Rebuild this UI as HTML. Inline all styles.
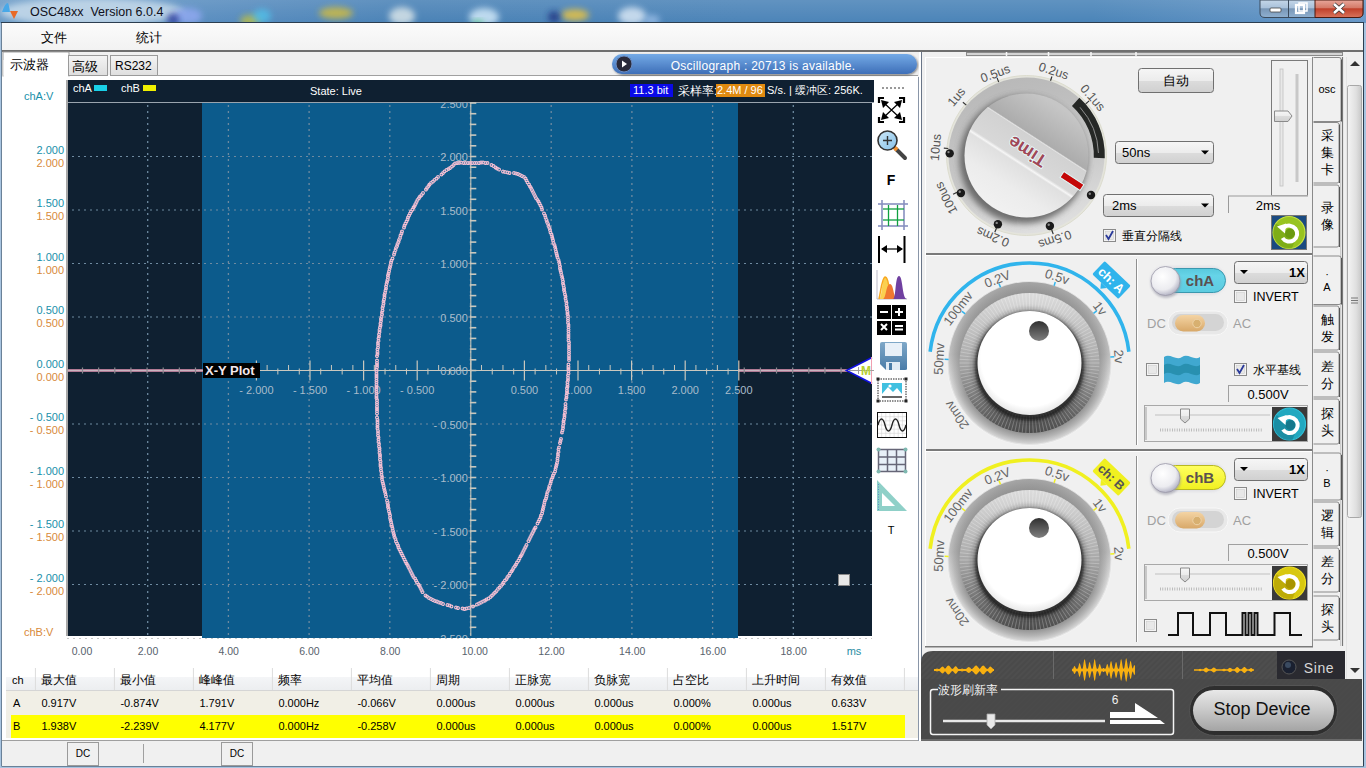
<!DOCTYPE html>
<html><head><meta charset="utf-8"><title>OSC48xx</title>
<style>html,body{margin:0;padding:0;width:1366px;height:768px;overflow:hidden;background:#f0f0f0;font-family:"Liberation Sans",sans-serif}</style></head>
<body><svg width="1366" height="768" viewBox="0 0 1366 768" style="display:block"><defs><linearGradient id="tb" x1="0" y1="0" x2="1" y2="0">
<stop offset="0" stop-color="#6a9ac6"/><stop offset="0.14" stop-color="#5a8ec0"/><stop offset="0.3" stop-color="#4a82b6"/>
<stop offset="0.55" stop-color="#4c84b8"/><stop offset="0.8" stop-color="#4a84b8"/><stop offset="1" stop-color="#6898c8"/></linearGradient>
<linearGradient id="tbv" x1="0" y1="0" x2="0" y2="1"><stop offset="0" stop-color="#fff" stop-opacity="0.12"/><stop offset="1" stop-color="#fff" stop-opacity="0"/></linearGradient>
<filter id="tbblur" x="-50%" y="-50%" width="200%" height="200%"><feGaussianBlur stdDeviation="3"/></filter><linearGradient id="wbtn" x1="0" y1="0" x2="0" y2="1"><stop offset="0" stop-color="#c4d6e8"/><stop offset="0.45" stop-color="#a9c1da"/><stop offset="0.5" stop-color="#7896b6"/><stop offset="1" stop-color="#8fb0d0"/></linearGradient>
<linearGradient id="wclose" x1="0" y1="0" x2="0" y2="1"><stop offset="0" stop-color="#e8a79a"/><stop offset="0.45" stop-color="#d47a68"/><stop offset="0.5" stop-color="#c0402a"/><stop offset="1" stop-color="#d9745c"/></linearGradient><linearGradient id="menu" x1="0" y1="0" x2="0" y2="1"><stop offset="0" stop-color="#fbfbfb"/><stop offset="1" stop-color="#f2f2f2"/></linearGradient><linearGradient id="tabg" x1="0" y1="0" x2="0" y2="1"><stop offset="0" stop-color="#f4f4f4"/><stop offset="1" stop-color="#dedede"/></linearGradient><linearGradient id="ban" x1="0" y1="0" x2="0" y2="1"><stop offset="0" stop-color="#74aae6"/><stop offset="1" stop-color="#3e6fb8"/></linearGradient>
<filter id="sh" x="-10%" y="-30%" width="120%" height="160%"><feGaussianBlur in="SourceAlpha" stdDeviation="1"/><feOffset dx="1" dy="1"/><feComponentTransfer><feFuncA type="linear" slope="0.5"/></feComponentTransfer><feMerge><feMergeNode/><feMergeNode in="SourceGraphic"/></feMerge></filter><clipPath id="blueclip"><rect x="202" y="103" width="536" height="535"/></clipPath><linearGradient id="mag" x1="0" y1="0" x2="1" y2="1"><stop offset="0" stop-color="#cfe8f8"/><stop offset="0.5" stop-color="#a8d4f0"/><stop offset="1" stop-color="#88c0e8"/></linearGradient><linearGradient id="flop" x1="0" y1="0" x2="0" y2="1"><stop offset="0" stop-color="#7fa8c8"/><stop offset="1" stop-color="#4a7ca8"/></linearGradient><linearGradient id="th" x1="0" y1="0" x2="0" y2="1"><stop offset="0" stop-color="#ffffff"/><stop offset="0.4" stop-color="#ffffff"/><stop offset="0.41" stop-color="#f4f5f7"/><stop offset="1" stop-color="#eceef0"/></linearGradient><linearGradient id="thumb" x1="0" y1="0" x2="1" y2="0"><stop offset="0" stop-color="#f4f4f4"/><stop offset="0.6" stop-color="#e0e0e0"/><stop offset="1" stop-color="#c8c8c8"/></linearGradient><radialGradient id="tring" cx="0.5" cy="0.5" r="0.5"><stop offset="0.75" stop-color="#a8a8a8"/><stop offset="0.92" stop-color="#c4c4c4"/><stop offset="1" stop-color="#dadada"/></radialGradient>
<linearGradient id="tring2" x1="0.3" y1="0" x2="0.6" y2="1"><stop offset="0" stop-color="#b8b8b8"/><stop offset="0.6" stop-color="#c8c8c8"/><stop offset="1" stop-color="#e0e0e0"/></linearGradient>
<linearGradient id="tface" x1="0.2" y1="0.95" x2="0.75" y2="0.1"><stop offset="0" stop-color="#f2f2f2"/><stop offset="0.25" stop-color="#ececec"/><stop offset="0.44" stop-color="#e0e0e0"/><stop offset="0.455" stop-color="#f6f6f6"/><stop offset="0.475" stop-color="#d8d8d8"/><stop offset="0.68" stop-color="#d2d2d2"/><stop offset="0.687" stop-color="#e4e4e4"/><stop offset="0.697" stop-color="#acacac"/><stop offset="1" stop-color="#c6c6c6"/></linearGradient>
<filter id="blur2"><feGaussianBlur stdDeviation="3"/></filter>
<filter id="blur1"><feGaussianBlur stdDeviation="1.2"/></filter><linearGradient id="btn" x1="0" y1="0" x2="0" y2="1"><stop offset="0" stop-color="#f6f6f6"/><stop offset="0.5" stop-color="#ececec"/><stop offset="0.51" stop-color="#dcdcdc"/><stop offset="1" stop-color="#d0d0d0"/></linearGradient><radialGradient id="cring" cx="0.5" cy="0.5" r="0.5"><stop offset="0.84" stop-color="#8c8c8c"/><stop offset="0.93" stop-color="#b4b4b4"/><stop offset="1" stop-color="#dadada"/></radialGradient>
<linearGradient id="cringtop" x1="0" y1="0" x2="0" y2="1"><stop offset="0" stop-color="#909090" stop-opacity="0.7"/><stop offset="0.45" stop-color="#a0a0a0" stop-opacity="0.4"/><stop offset="0.7" stop-color="#ffffff" stop-opacity="0"/></linearGradient>
<linearGradient id="cridge" x1="0" y1="0" x2="0" y2="1"><stop offset="0" stop-color="#dcdcdc"/><stop offset="0.5" stop-color="#a8a8a8"/><stop offset="1" stop-color="#4a4a4a"/></linearGradient>
<linearGradient id="cdot" x1="0" y1="0" x2="0" y2="1"><stop offset="0" stop-color="#303030"/><stop offset="1" stop-color="#808080"/></linearGradient>
<radialGradient id="cwhite" cx="0.5" cy="0.45" r="0.55"><stop offset="0.85" stop-color="#ffffff"/><stop offset="1" stop-color="#e8e8e8"/></radialGradient>
<linearGradient id="pillc" x1="0" y1="0" x2="0" y2="1"><stop offset="0" stop-color="#58c8dc"/><stop offset="0.3" stop-color="#66d4e8"/><stop offset="1" stop-color="#5ccce0"/></linearGradient>
<linearGradient id="pilly" x1="0" y1="0" x2="0" y2="1"><stop offset="0" stop-color="#ffff60"/><stop offset="1" stop-color="#f0f020"/></linearGradient>
<radialGradient id="pknob" cx="0.4" cy="0.35" r="0.65"><stop offset="0" stop-color="#ffffff"/><stop offset="0.7" stop-color="#ececf0"/><stop offset="1" stop-color="#b8b8c8"/></radialGradient>
<linearGradient id="tan" x1="0" y1="0" x2="0" y2="1"><stop offset="0" stop-color="#f4d4a4"/><stop offset="1" stop-color="#d8a868"/></linearGradient><pattern id="stripe" width="4" height="4" patternUnits="userSpaceOnUse" patternTransform="rotate(45)"><rect width="4" height="4" fill="#4e4e4e"/><rect width="2" height="4" fill="#4a4a4a"/></pattern>
<linearGradient id="stopb" x1="0" y1="0" x2="0" y2="1"><stop offset="0" stop-color="#e8e8e8"/><stop offset="0.5" stop-color="#c8c8c8"/><stop offset="1" stop-color="#a4a4a4"/></linearGradient></defs><rect x="0" y="0" width="1366" height="768" fill="url(#tb)" /><rect x="0" y="0" width="1366" height="23" fill="url(#tbv)" /><ellipse cx="92" cy="12" rx="92" ry="14" fill="#d4e4f0" opacity="0.75" filter="url(#tbblur)"/><ellipse cx="188" cy="16" rx="14" ry="8" fill="#90a8f0" opacity="0.85" filter="url(#tbblur)"/><ellipse cx="173" cy="19" rx="6" ry="6" fill="#1a2890" opacity="0.7" filter="url(#tbblur)"/><ellipse cx="250" cy="21" rx="10" ry="6" fill="#c0c040" opacity="0.8" filter="url(#tbblur)"/><ellipse cx="262" cy="16" rx="9" ry="7" fill="#50c8f0" opacity="0.7" filter="url(#tbblur)"/><ellipse cx="336" cy="13" rx="17" ry="6" fill="#c8b848" opacity="0.9" filter="url(#tbblur)"/><ellipse cx="402" cy="16" rx="13" ry="9" fill="#d8e4e8" opacity="0.85" filter="url(#tbblur)"/><ellipse cx="484" cy="17" rx="15" ry="9" fill="#d0e8f8" opacity="0.85" filter="url(#tbblur)"/><ellipse cx="478" cy="23" rx="6" ry="3" fill="#40c070" opacity="0.7" filter="url(#tbblur)"/><ellipse cx="575" cy="15" rx="14" ry="6" fill="#e0c048" opacity="0.9" filter="url(#tbblur)"/><ellipse cx="554" cy="17" rx="6" ry="6" fill="#182878" opacity="0.7" filter="url(#tbblur)"/><ellipse cx="632" cy="16" rx="14" ry="9" fill="#e0ecf8" opacity="0.8" filter="url(#tbblur)"/><ellipse cx="652" cy="20" rx="8" ry="5" fill="#a8c8f0" opacity="0.7" filter="url(#tbblur)"/><path d="M1260,0 H1363 V13 Q1363,17.5 1358,17.5 H1265 Q1260,17.5 1260,13 Z" fill="url(#wbtn)" stroke="#3a4a5c" stroke-width="1"/><path d="M1315,0 H1363 V13 Q1363,17.5 1358,17.5 H1315 Z" fill="url(#wclose)" stroke="#4a1a10" stroke-width="1"/><line x1="1288.5" y1="0" x2="1288.5" y2="17" stroke="#3a4a5c" stroke-width="1" /><rect x="1270" y="8" width="11" height="4" fill="#fff" stroke="#444" stroke-width="0.8" rx="1"/><rect x="1296" y="5" width="8" height="8" fill="none" stroke="#fff" stroke-width="2.2"/><rect x="1299" y="3" width="8" height="8" fill="none" stroke="#fff" stroke-width="1.5"/><path d="M1334,4 L1344,13 M1344,4 L1334,13" stroke="#333" stroke-width="4"/><path d="M1334,4 L1344,13 M1344,4 L1334,13" stroke="#fff" stroke-width="2.6"/><path d="M2,12 Q5,3 8,3 Q9,5 10,12 Z" fill="#48a8e8"/><path d="M10,11 H18 L14,19 Z" fill="#e86a28"/><text x="30" y="16.00" font-size="12.5" fill="#101020" text-anchor="start" font-weight="normal" font-family="Liberation Sans, sans-serif" >OSC48xx&#160; Version 6.0.4</text><rect x="2" y="23" width="1361" height="743" fill="#f0f0f0" /><rect x="1.5" y="22.5" width="1362" height="744" fill="none" stroke="#2c3e50" stroke-width="1"/><rect x="2" y="23" width="1361" height="27" fill="url(#menu)" /><rect x="2" y="50" width="1361" height="2" fill="#6f6f6f" /><text x="41" y="41.68" font-size="13" fill="#000" text-anchor="start" font-weight="normal" font-family="Liberation Sans, sans-serif" >文件</text><text x="136" y="41.68" font-size="13" fill="#000" text-anchor="start" font-weight="normal" font-family="Liberation Sans, sans-serif" >统计</text><rect x="2" y="52" width="916" height="25" fill="#f0f0f0" /><rect x="2" y="75" width="916" height="666" fill="#ffffff" /><rect x="3" y="52" width="66" height="24" fill="#ffffff" stroke="#a0a0a0" stroke-width="1"/><rect x="3.5" y="60" width="65" height="20" fill="#fff" /><text x="10" y="68.68" font-size="13" fill="#000" text-anchor="start" font-weight="normal" font-family="Liberation Sans, sans-serif" >示波器</text><rect x="68.5" y="55.5" width="39" height="20" fill="url(#tabg)" stroke="#9a9a9a" stroke-width="1"/><text x="72" y="70.68" font-size="13" fill="#000" text-anchor="start" font-weight="normal" font-family="Liberation Sans, sans-serif" >高级</text><rect x="110.5" y="55.5" width="47" height="20" fill="url(#tabg)" stroke="#9a9a9a" stroke-width="1"/><text x="115" y="70.32" font-size="12" fill="#000" text-anchor="start" font-weight="normal" font-family="Liberation Sans, sans-serif" >RS232</text><line x1="157" y1="75.5" x2="918" y2="75.5" stroke="#a0a0a0" stroke-width="1" /><rect x="612" y="54" width="305" height="20" rx="10" fill="url(#ban)" filter="url(#sh)"/><circle cx="624" cy="64" r="8" fill="#2a2a3a"/><circle cx="624" cy="64" r="8" fill="none" stroke="#6a8ac0" stroke-width="1"/><path d="M622,60.5 L627,64 L622,67.5 Z" fill="#fff"/><text x="763" y="69.82" font-size="12" fill="#ffffff" text-anchor="middle" font-weight="normal" font-family="Liberation Sans, sans-serif" letter-spacing="0.25">Oscillograph : 20713 is available.</text><rect x="66" y="80" width="808" height="22" fill="#0f2031" /><rect x="66" y="102" width="808" height="1" fill="#9aa4ae" /><rect x="66" y="103" width="806" height="533" fill="#0f2031" /><rect x="66" y="80" width="2" height="556" fill="#a8a8a8" /><rect x="202" y="103" width="536" height="535" fill="#0c5b8c" /><line x1="67" y1="638.5" x2="872" y2="638.5" stroke="#c8c8c8" stroke-width="1" stroke-dasharray="2 4"/><line x1="72" y1="156.5" x2="872" y2="156.5" stroke="#6e8aa0" stroke-width="1" stroke-dasharray="2 4"/><line x1="72" y1="210.0" x2="872" y2="210.0" stroke="#6e8aa0" stroke-width="1" stroke-dasharray="2 4"/><line x1="72" y1="263.5" x2="872" y2="263.5" stroke="#6e8aa0" stroke-width="1" stroke-dasharray="2 4"/><line x1="72" y1="317.0" x2="872" y2="317.0" stroke="#6e8aa0" stroke-width="1" stroke-dasharray="2 4"/><line x1="72" y1="370.5" x2="872" y2="370.5" stroke="#6e8aa0" stroke-width="1" stroke-dasharray="2 4"/><line x1="72" y1="424.0" x2="872" y2="424.0" stroke="#6e8aa0" stroke-width="1" stroke-dasharray="2 4"/><line x1="72" y1="477.5" x2="872" y2="477.5" stroke="#6e8aa0" stroke-width="1" stroke-dasharray="2 4"/><line x1="72" y1="531.0" x2="872" y2="531.0" stroke="#6e8aa0" stroke-width="1" stroke-dasharray="2 4"/><line x1="72" y1="584.5" x2="872" y2="584.5" stroke="#6e8aa0" stroke-width="1" stroke-dasharray="2 4"/><line x1="147.7" y1="105" x2="147.7" y2="636" stroke="#6e8aa0" stroke-width="1.3" stroke-dasharray="2 4"/><line x1="228.4" y1="105" x2="228.4" y2="636" stroke="#6e8aa0" stroke-width="1.3" stroke-dasharray="2 4"/><line x1="309.1" y1="105" x2="309.1" y2="636" stroke="#6e8aa0" stroke-width="1.3" stroke-dasharray="2 4"/><line x1="389.8" y1="105" x2="389.8" y2="636" stroke="#6e8aa0" stroke-width="1.3" stroke-dasharray="2 4"/><line x1="470.5" y1="105" x2="470.5" y2="636" stroke="#6e8aa0" stroke-width="1.3" stroke-dasharray="2 4"/><line x1="551.2" y1="105" x2="551.2" y2="636" stroke="#6e8aa0" stroke-width="1.3" stroke-dasharray="2 4"/><line x1="631.9" y1="105" x2="631.9" y2="636" stroke="#6e8aa0" stroke-width="1.3" stroke-dasharray="2 4"/><line x1="712.6" y1="105" x2="712.6" y2="636" stroke="#6e8aa0" stroke-width="1.3" stroke-dasharray="2 4"/><line x1="793.3000000000001" y1="105" x2="793.3000000000001" y2="636" stroke="#6e8aa0" stroke-width="1.3" stroke-dasharray="2 4"/><line x1="68" y1="370.5" x2="203" y2="370.5" stroke="#b07a94" stroke-width="3" /><line x1="738" y1="370.5" x2="848" y2="370.5" stroke="#b07a94" stroke-width="3" /><line x1="68" y1="370.5" x2="203" y2="370.5" stroke="#c8b4bf" stroke-width="1" /><line x1="738" y1="370.5" x2="848" y2="370.5" stroke="#c8b4bf" stroke-width="1" /><line x1="82.5" y1="367.5" x2="82.5" y2="373.5" stroke="#8a8a90" stroke-width="1.2" /><line x1="98.64" y1="367.5" x2="98.64" y2="373.5" stroke="#8a8a90" stroke-width="1.2" /><line x1="114.78" y1="367.5" x2="114.78" y2="373.5" stroke="#8a8a90" stroke-width="1.2" /><line x1="130.92000000000002" y1="367.5" x2="130.92000000000002" y2="373.5" stroke="#8a8a90" stroke-width="1.2" /><line x1="147.06" y1="367.5" x2="147.06" y2="373.5" stroke="#8a8a90" stroke-width="1.2" /><line x1="163.2" y1="367.5" x2="163.2" y2="373.5" stroke="#8a8a90" stroke-width="1.2" /><line x1="179.34" y1="367.5" x2="179.34" y2="373.5" stroke="#8a8a90" stroke-width="1.2" /><line x1="195.48000000000002" y1="367.5" x2="195.48000000000002" y2="373.5" stroke="#8a8a90" stroke-width="1.2" /><line x1="744.24" y1="367.5" x2="744.24" y2="373.5" stroke="#8a8a90" stroke-width="1.2" /><line x1="760.38" y1="367.5" x2="760.38" y2="373.5" stroke="#8a8a90" stroke-width="1.2" /><line x1="776.52" y1="367.5" x2="776.52" y2="373.5" stroke="#8a8a90" stroke-width="1.2" /><line x1="792.6600000000001" y1="367.5" x2="792.6600000000001" y2="373.5" stroke="#8a8a90" stroke-width="1.2" /><line x1="808.8000000000001" y1="367.5" x2="808.8000000000001" y2="373.5" stroke="#8a8a90" stroke-width="1.2" /><line x1="824.94" y1="367.5" x2="824.94" y2="373.5" stroke="#8a8a90" stroke-width="1.2" /><line x1="841.08" y1="367.5" x2="841.08" y2="373.5" stroke="#8a8a90" stroke-width="1.2" /><line x1="203" y1="370.5" x2="738" y2="370.5" stroke="#cac8be" stroke-width="1.1" /><line x1="470.8" y1="103" x2="470.8" y2="636" stroke="#cac8be" stroke-width="1.1" /><line x1="213.51999999999998" y1="368.5" x2="213.51999999999998" y2="374.5" stroke="#cac8be" stroke-width="1" /><line x1="224.24" y1="365.0" x2="224.24" y2="370.5" stroke="#cac8be" stroke-width="1" /><line x1="234.95999999999998" y1="368.5" x2="234.95999999999998" y2="374.5" stroke="#cac8be" stroke-width="1" /><line x1="245.67999999999998" y1="365.0" x2="245.67999999999998" y2="370.5" stroke="#cac8be" stroke-width="1" /><line x1="256.4" y1="360.5" x2="256.4" y2="380.5" stroke="#cac8be" stroke-width="1.2" /><line x1="267.12" y1="365.0" x2="267.12" y2="370.5" stroke="#cac8be" stroke-width="1" /><line x1="277.84" y1="368.5" x2="277.84" y2="374.5" stroke="#cac8be" stroke-width="1" /><line x1="288.56" y1="365.0" x2="288.56" y2="370.5" stroke="#cac8be" stroke-width="1" /><line x1="299.28" y1="368.5" x2="299.28" y2="374.5" stroke="#cac8be" stroke-width="1" /><line x1="310.0" y1="360.5" x2="310.0" y2="380.5" stroke="#cac8be" stroke-width="1.2" /><line x1="320.72" y1="368.5" x2="320.72" y2="374.5" stroke="#cac8be" stroke-width="1" /><line x1="331.44" y1="365.0" x2="331.44" y2="370.5" stroke="#cac8be" stroke-width="1" /><line x1="342.15999999999997" y1="368.5" x2="342.15999999999997" y2="374.5" stroke="#cac8be" stroke-width="1" /><line x1="352.88" y1="365.0" x2="352.88" y2="370.5" stroke="#cac8be" stroke-width="1" /><line x1="363.6" y1="360.5" x2="363.6" y2="380.5" stroke="#cac8be" stroke-width="1.2" /><line x1="374.32" y1="365.0" x2="374.32" y2="370.5" stroke="#cac8be" stroke-width="1" /><line x1="385.04" y1="368.5" x2="385.04" y2="374.5" stroke="#cac8be" stroke-width="1" /><line x1="395.76" y1="365.0" x2="395.76" y2="370.5" stroke="#cac8be" stroke-width="1" /><line x1="406.48" y1="368.5" x2="406.48" y2="374.5" stroke="#cac8be" stroke-width="1" /><line x1="417.2" y1="360.5" x2="417.2" y2="380.5" stroke="#cac8be" stroke-width="1.2" /><line x1="427.92" y1="368.5" x2="427.92" y2="374.5" stroke="#cac8be" stroke-width="1" /><line x1="438.64" y1="365.0" x2="438.64" y2="370.5" stroke="#cac8be" stroke-width="1" /><line x1="449.36" y1="368.5" x2="449.36" y2="374.5" stroke="#cac8be" stroke-width="1" /><line x1="460.08" y1="365.0" x2="460.08" y2="370.5" stroke="#cac8be" stroke-width="1" /><line x1="470.8" y1="360.5" x2="470.8" y2="380.5" stroke="#cac8be" stroke-width="1.2" /><line x1="481.52000000000004" y1="365.0" x2="481.52000000000004" y2="370.5" stroke="#cac8be" stroke-width="1" /><line x1="492.24" y1="368.5" x2="492.24" y2="374.5" stroke="#cac8be" stroke-width="1" /><line x1="502.96000000000004" y1="365.0" x2="502.96000000000004" y2="370.5" stroke="#cac8be" stroke-width="1" /><line x1="513.6800000000001" y1="368.5" x2="513.6800000000001" y2="374.5" stroke="#cac8be" stroke-width="1" /><line x1="524.4" y1="360.5" x2="524.4" y2="380.5" stroke="#cac8be" stroke-width="1.2" /><line x1="535.12" y1="368.5" x2="535.12" y2="374.5" stroke="#cac8be" stroke-width="1" /><line x1="545.84" y1="365.0" x2="545.84" y2="370.5" stroke="#cac8be" stroke-width="1" /><line x1="556.5600000000001" y1="368.5" x2="556.5600000000001" y2="374.5" stroke="#cac8be" stroke-width="1" /><line x1="567.28" y1="365.0" x2="567.28" y2="370.5" stroke="#cac8be" stroke-width="1" /><line x1="578.0" y1="360.5" x2="578.0" y2="380.5" stroke="#cac8be" stroke-width="1.2" /><line x1="588.72" y1="365.0" x2="588.72" y2="370.5" stroke="#cac8be" stroke-width="1" /><line x1="599.44" y1="368.5" x2="599.44" y2="374.5" stroke="#cac8be" stroke-width="1" /><line x1="610.1600000000001" y1="365.0" x2="610.1600000000001" y2="370.5" stroke="#cac8be" stroke-width="1" /><line x1="620.88" y1="368.5" x2="620.88" y2="374.5" stroke="#cac8be" stroke-width="1" /><line x1="631.6" y1="360.5" x2="631.6" y2="380.5" stroke="#cac8be" stroke-width="1.2" /><line x1="642.32" y1="368.5" x2="642.32" y2="374.5" stroke="#cac8be" stroke-width="1" /><line x1="653.04" y1="365.0" x2="653.04" y2="370.5" stroke="#cac8be" stroke-width="1" /><line x1="663.76" y1="368.5" x2="663.76" y2="374.5" stroke="#cac8be" stroke-width="1" /><line x1="674.48" y1="365.0" x2="674.48" y2="370.5" stroke="#cac8be" stroke-width="1" /><line x1="685.2" y1="360.5" x2="685.2" y2="380.5" stroke="#cac8be" stroke-width="1.2" /><line x1="695.9200000000001" y1="365.0" x2="695.9200000000001" y2="370.5" stroke="#cac8be" stroke-width="1" /><line x1="706.6400000000001" y1="368.5" x2="706.6400000000001" y2="374.5" stroke="#cac8be" stroke-width="1" /><line x1="717.36" y1="365.0" x2="717.36" y2="370.5" stroke="#cac8be" stroke-width="1" /><line x1="728.08" y1="368.5" x2="728.08" y2="374.5" stroke="#cac8be" stroke-width="1" /><line x1="738.8" y1="360.5" x2="738.8" y2="380.5" stroke="#cac8be" stroke-width="1.2" /><line x1="469.8" y1="627.3" x2="476.3" y2="627.3" stroke="#cac8be" stroke-width="1.6" /><line x1="469.8" y1="616.6" x2="476.3" y2="616.6" stroke="#cac8be" stroke-width="1.6" /><line x1="469.8" y1="605.9" x2="476.3" y2="605.9" stroke="#cac8be" stroke-width="1.6" /><line x1="469.8" y1="595.2" x2="476.3" y2="595.2" stroke="#cac8be" stroke-width="1.6" /><line x1="469.8" y1="584.5" x2="476.3" y2="584.5" stroke="#cac8be" stroke-width="1.6" /><line x1="469.8" y1="573.8" x2="476.3" y2="573.8" stroke="#cac8be" stroke-width="1.6" /><line x1="469.8" y1="563.1" x2="476.3" y2="563.1" stroke="#cac8be" stroke-width="1.6" /><line x1="469.8" y1="552.4" x2="476.3" y2="552.4" stroke="#cac8be" stroke-width="1.6" /><line x1="469.8" y1="541.7" x2="476.3" y2="541.7" stroke="#cac8be" stroke-width="1.6" /><line x1="469.8" y1="531.0" x2="476.3" y2="531.0" stroke="#cac8be" stroke-width="1.6" /><line x1="469.8" y1="520.3" x2="476.3" y2="520.3" stroke="#cac8be" stroke-width="1.6" /><line x1="469.8" y1="509.6" x2="476.3" y2="509.6" stroke="#cac8be" stroke-width="1.6" /><line x1="469.8" y1="498.9" x2="476.3" y2="498.9" stroke="#cac8be" stroke-width="1.6" /><line x1="469.8" y1="488.2" x2="476.3" y2="488.2" stroke="#cac8be" stroke-width="1.6" /><line x1="469.8" y1="477.5" x2="476.3" y2="477.5" stroke="#cac8be" stroke-width="1.6" /><line x1="469.8" y1="466.8" x2="476.3" y2="466.8" stroke="#cac8be" stroke-width="1.6" /><line x1="469.8" y1="456.1" x2="476.3" y2="456.1" stroke="#cac8be" stroke-width="1.6" /><line x1="469.8" y1="445.4" x2="476.3" y2="445.4" stroke="#cac8be" stroke-width="1.6" /><line x1="469.8" y1="434.7" x2="476.3" y2="434.7" stroke="#cac8be" stroke-width="1.6" /><line x1="469.8" y1="424.0" x2="476.3" y2="424.0" stroke="#cac8be" stroke-width="1.6" /><line x1="469.8" y1="413.3" x2="476.3" y2="413.3" stroke="#cac8be" stroke-width="1.6" /><line x1="469.8" y1="402.6" x2="476.3" y2="402.6" stroke="#cac8be" stroke-width="1.6" /><line x1="469.8" y1="391.9" x2="476.3" y2="391.9" stroke="#cac8be" stroke-width="1.6" /><line x1="469.8" y1="381.2" x2="476.3" y2="381.2" stroke="#cac8be" stroke-width="1.6" /><line x1="469.8" y1="370.5" x2="476.3" y2="370.5" stroke="#cac8be" stroke-width="1.6" /><line x1="469.8" y1="359.8" x2="476.3" y2="359.8" stroke="#cac8be" stroke-width="1.6" /><line x1="469.8" y1="349.1" x2="476.3" y2="349.1" stroke="#cac8be" stroke-width="1.6" /><line x1="469.8" y1="338.4" x2="476.3" y2="338.4" stroke="#cac8be" stroke-width="1.6" /><line x1="469.8" y1="327.7" x2="476.3" y2="327.7" stroke="#cac8be" stroke-width="1.6" /><line x1="469.8" y1="317.0" x2="476.3" y2="317.0" stroke="#cac8be" stroke-width="1.6" /><line x1="469.8" y1="306.3" x2="476.3" y2="306.3" stroke="#cac8be" stroke-width="1.6" /><line x1="469.8" y1="295.6" x2="476.3" y2="295.6" stroke="#cac8be" stroke-width="1.6" /><line x1="469.8" y1="284.9" x2="476.3" y2="284.9" stroke="#cac8be" stroke-width="1.6" /><line x1="469.8" y1="274.2" x2="476.3" y2="274.2" stroke="#cac8be" stroke-width="1.6" /><line x1="469.8" y1="263.5" x2="476.3" y2="263.5" stroke="#cac8be" stroke-width="1.6" /><line x1="469.8" y1="252.8" x2="476.3" y2="252.8" stroke="#cac8be" stroke-width="1.6" /><line x1="469.8" y1="242.1" x2="476.3" y2="242.1" stroke="#cac8be" stroke-width="1.6" /><line x1="469.8" y1="231.4" x2="476.3" y2="231.4" stroke="#cac8be" stroke-width="1.6" /><line x1="469.8" y1="220.7" x2="476.3" y2="220.7" stroke="#cac8be" stroke-width="1.6" /><line x1="469.8" y1="210.0" x2="476.3" y2="210.0" stroke="#cac8be" stroke-width="1.6" /><line x1="469.8" y1="199.29999999999998" x2="476.3" y2="199.29999999999998" stroke="#cac8be" stroke-width="1.6" /><line x1="469.8" y1="188.6" x2="476.3" y2="188.6" stroke="#cac8be" stroke-width="1.6" /><line x1="469.8" y1="177.89999999999998" x2="476.3" y2="177.89999999999998" stroke="#cac8be" stroke-width="1.6" /><line x1="469.8" y1="167.2" x2="476.3" y2="167.2" stroke="#cac8be" stroke-width="1.6" /><line x1="469.8" y1="156.5" x2="476.3" y2="156.5" stroke="#cac8be" stroke-width="1.6" /><line x1="469.8" y1="145.79999999999998" x2="476.3" y2="145.79999999999998" stroke="#cac8be" stroke-width="1.6" /><line x1="469.8" y1="135.1" x2="476.3" y2="135.1" stroke="#cac8be" stroke-width="1.6" /><line x1="469.8" y1="124.39999999999998" x2="476.3" y2="124.39999999999998" stroke="#cac8be" stroke-width="1.6" /><line x1="469.8" y1="113.69999999999999" x2="476.3" y2="113.69999999999999" stroke="#cac8be" stroke-width="1.6" /><line x1="469.8" y1="103.0" x2="476.3" y2="103.0" stroke="#cac8be" stroke-width="1.6" /><g clip-path="url(#blueclip)"></g><text x="256.4" y="393.96" font-size="11" fill="#a8bccb" text-anchor="middle" font-weight="normal" font-family="Liberation Sans, sans-serif" >- 2.000</text><text x="310.0" y="393.96" font-size="11" fill="#a8bccb" text-anchor="middle" font-weight="normal" font-family="Liberation Sans, sans-serif" >- 1.500</text><text x="363.6" y="393.96" font-size="11" fill="#a8bccb" text-anchor="middle" font-weight="normal" font-family="Liberation Sans, sans-serif" >- 1.000</text><text x="417.2" y="393.96" font-size="11" fill="#a8bccb" text-anchor="middle" font-weight="normal" font-family="Liberation Sans, sans-serif" >- 0.500</text><text x="524.4" y="393.96" font-size="11" fill="#a8bccb" text-anchor="middle" font-weight="normal" font-family="Liberation Sans, sans-serif" >0.500</text><text x="578.0" y="393.96" font-size="11" fill="#a8bccb" text-anchor="middle" font-weight="normal" font-family="Liberation Sans, sans-serif" >1.000</text><text x="631.6" y="393.96" font-size="11" fill="#a8bccb" text-anchor="middle" font-weight="normal" font-family="Liberation Sans, sans-serif" >1.500</text><text x="685.2" y="393.96" font-size="11" fill="#a8bccb" text-anchor="middle" font-weight="normal" font-family="Liberation Sans, sans-serif" >2.000</text><text x="738.8" y="393.96" font-size="11" fill="#a8bccb" text-anchor="middle" font-weight="normal" font-family="Liberation Sans, sans-serif" >2.500</text><g clip-path="url(#blueclip)"><text x="467.8" y="107.96" font-size="11" fill="#a8bccb" text-anchor="end" font-weight="normal" font-family="Liberation Sans, sans-serif" >2.500</text><text x="467.8" y="161.46" font-size="11" fill="#a8bccb" text-anchor="end" font-weight="normal" font-family="Liberation Sans, sans-serif" >2.000</text><text x="467.8" y="214.96" font-size="11" fill="#a8bccb" text-anchor="end" font-weight="normal" font-family="Liberation Sans, sans-serif" >1.500</text><text x="467.8" y="268.46" font-size="11" fill="#a8bccb" text-anchor="end" font-weight="normal" font-family="Liberation Sans, sans-serif" >1.000</text><text x="467.8" y="321.96" font-size="11" fill="#a8bccb" text-anchor="end" font-weight="normal" font-family="Liberation Sans, sans-serif" >0.500</text><text x="467.8" y="375.46" font-size="11" fill="#a8bccb" text-anchor="end" font-weight="normal" font-family="Liberation Sans, sans-serif" >0.000</text><text x="467.8" y="428.96" font-size="11" fill="#a8bccb" text-anchor="end" font-weight="normal" font-family="Liberation Sans, sans-serif" >- 0.500</text><text x="467.8" y="482.46" font-size="11" fill="#a8bccb" text-anchor="end" font-weight="normal" font-family="Liberation Sans, sans-serif" >- 1.000</text><text x="467.8" y="535.96" font-size="11" fill="#a8bccb" text-anchor="end" font-weight="normal" font-family="Liberation Sans, sans-serif" >- 1.500</text><text x="467.8" y="589.46" font-size="11" fill="#a8bccb" text-anchor="end" font-weight="normal" font-family="Liberation Sans, sans-serif" >- 2.000</text><text x="467.8" y="642.96" font-size="11" fill="#a8bccb" text-anchor="end" font-weight="normal" font-family="Liberation Sans, sans-serif" >- 2.500</text></g><rect x="203" y="363" width="57" height="15" fill="#000" /><text x="205" y="375.18" font-size="13" fill="#f4e8ec" text-anchor="start" font-weight="bold" font-family="Liberation Sans, sans-serif" >X-Y Plot</text><path d="M455.6,163.0a1.4,1.4 0 1 0 2.8,0a1.4,1.4 0 1 0 -2.8,0M457.6,163.0a1.4,1.4 0 1 0 2.8,0a1.4,1.4 0 1 0 -2.8,0M459.6,162.5a1.4,1.4 0 1 0 2.8,0a1.4,1.4 0 1 0 -2.8,0M462.1,163.0a1.4,1.4 0 1 0 2.8,0a1.4,1.4 0 1 0 -2.8,0M464.1,163.0a1.4,1.4 0 1 0 2.8,0a1.4,1.4 0 1 0 -2.8,0M466.6,163.0a1.4,1.4 0 1 0 2.8,0a1.4,1.4 0 1 0 -2.8,0M468.6,163.0a1.4,1.4 0 1 0 2.8,0a1.4,1.4 0 1 0 -2.8,0M470.6,163.0a1.4,1.4 0 1 0 2.8,0a1.4,1.4 0 1 0 -2.8,0M473.1,163.0a1.4,1.4 0 1 0 2.8,0a1.4,1.4 0 1 0 -2.8,0M475.1,163.0a1.4,1.4 0 1 0 2.8,0a1.4,1.4 0 1 0 -2.8,0M477.6,163.0a1.4,1.4 0 1 0 2.8,0a1.4,1.4 0 1 0 -2.8,0M479.6,162.5a1.4,1.4 0 1 0 2.8,0a1.4,1.4 0 1 0 -2.8,0M481.6,162.5a1.4,1.4 0 1 0 2.8,0a1.4,1.4 0 1 0 -2.8,0M484.1,163.0a1.4,1.4 0 1 0 2.8,0a1.4,1.4 0 1 0 -2.8,0M486.1,163.0a1.4,1.4 0 1 0 2.8,0a1.4,1.4 0 1 0 -2.8,0M490.1,165.0a1.4,1.4 0 1 0 2.8,0a1.4,1.4 0 1 0 -2.8,0M492.1,166.0a1.4,1.4 0 1 0 2.8,0a1.4,1.4 0 1 0 -2.8,0M494.1,167.5a1.4,1.4 0 1 0 2.8,0a1.4,1.4 0 1 0 -2.8,0M495.6,168.5a1.4,1.4 0 1 0 2.8,0a1.4,1.4 0 1 0 -2.8,0M497.6,169.5a1.4,1.4 0 1 0 2.8,0a1.4,1.4 0 1 0 -2.8,0M501.6,171.5a1.4,1.4 0 1 0 2.8,0a1.4,1.4 0 1 0 -2.8,0M503.6,172.0a1.4,1.4 0 1 0 2.8,0a1.4,1.4 0 1 0 -2.8,0M506.1,172.5a1.4,1.4 0 1 0 2.8,0a1.4,1.4 0 1 0 -2.8,0M508.1,173.0a1.4,1.4 0 1 0 2.8,0a1.4,1.4 0 1 0 -2.8,0M512.6,173.0a1.4,1.4 0 1 0 2.8,0a1.4,1.4 0 1 0 -2.8,0M514.6,173.5a1.4,1.4 0 1 0 2.8,0a1.4,1.4 0 1 0 -2.8,0M516.6,174.0a1.4,1.4 0 1 0 2.8,0a1.4,1.4 0 1 0 -2.8,0M518.6,175.0a1.4,1.4 0 1 0 2.8,0a1.4,1.4 0 1 0 -2.8,0M520.6,176.0a1.4,1.4 0 1 0 2.8,0a1.4,1.4 0 1 0 -2.8,0M522.6,177.0a1.4,1.4 0 1 0 2.8,0a1.4,1.4 0 1 0 -2.8,0M524.1,178.5a1.4,1.4 0 1 0 2.8,0a1.4,1.4 0 1 0 -2.8,0M525.1,180.5a1.4,1.4 0 1 0 2.8,0a1.4,1.4 0 1 0 -2.8,0M526.1,182.5a1.4,1.4 0 1 0 2.8,0a1.4,1.4 0 1 0 -2.8,0M527.6,184.5a1.4,1.4 0 1 0 2.8,0a1.4,1.4 0 1 0 -2.8,0M528.6,186.5a1.4,1.4 0 1 0 2.8,0a1.4,1.4 0 1 0 -2.8,0M529.6,188.0a1.4,1.4 0 1 0 2.8,0a1.4,1.4 0 1 0 -2.8,0M530.6,190.0a1.4,1.4 0 1 0 2.8,0a1.4,1.4 0 1 0 -2.8,0M531.6,192.0a1.4,1.4 0 1 0 2.8,0a1.4,1.4 0 1 0 -2.8,0M532.6,194.0a1.4,1.4 0 1 0 2.8,0a1.4,1.4 0 1 0 -2.8,0M533.6,196.0a1.4,1.4 0 1 0 2.8,0a1.4,1.4 0 1 0 -2.8,0M534.6,198.0a1.4,1.4 0 1 0 2.8,0a1.4,1.4 0 1 0 -2.8,0M536.1,200.0a1.4,1.4 0 1 0 2.8,0a1.4,1.4 0 1 0 -2.8,0M537.1,201.5a1.4,1.4 0 1 0 2.8,0a1.4,1.4 0 1 0 -2.8,0M538.1,203.5a1.4,1.4 0 1 0 2.8,0a1.4,1.4 0 1 0 -2.8,0M539.1,205.5a1.4,1.4 0 1 0 2.8,0a1.4,1.4 0 1 0 -2.8,0M540.1,207.5a1.4,1.4 0 1 0 2.8,0a1.4,1.4 0 1 0 -2.8,0M540.6,209.5a1.4,1.4 0 1 0 2.8,0a1.4,1.4 0 1 0 -2.8,0M542.6,213.5a1.4,1.4 0 1 0 2.8,0a1.4,1.4 0 1 0 -2.8,0M543.6,215.5a1.4,1.4 0 1 0 2.8,0a1.4,1.4 0 1 0 -2.8,0M544.1,217.5a1.4,1.4 0 1 0 2.8,0a1.4,1.4 0 1 0 -2.8,0M545.1,220.0a1.4,1.4 0 1 0 2.8,0a1.4,1.4 0 1 0 -2.8,0M545.6,222.0a1.4,1.4 0 1 0 2.8,0a1.4,1.4 0 1 0 -2.8,0M546.6,224.0a1.4,1.4 0 1 0 2.8,0a1.4,1.4 0 1 0 -2.8,0M547.1,226.0a1.4,1.4 0 1 0 2.8,0a1.4,1.4 0 1 0 -2.8,0M548.1,228.0a1.4,1.4 0 1 0 2.8,0a1.4,1.4 0 1 0 -2.8,0M548.6,230.0a1.4,1.4 0 1 0 2.8,0a1.4,1.4 0 1 0 -2.8,0M549.1,232.5a1.4,1.4 0 1 0 2.8,0a1.4,1.4 0 1 0 -2.8,0M550.1,234.5a1.4,1.4 0 1 0 2.8,0a1.4,1.4 0 1 0 -2.8,0M550.6,236.5a1.4,1.4 0 1 0 2.8,0a1.4,1.4 0 1 0 -2.8,0M551.1,238.5a1.4,1.4 0 1 0 2.8,0a1.4,1.4 0 1 0 -2.8,0M551.6,240.5a1.4,1.4 0 1 0 2.8,0a1.4,1.4 0 1 0 -2.8,0M552.1,243.0a1.4,1.4 0 1 0 2.8,0a1.4,1.4 0 1 0 -2.8,0M553.1,245.0a1.4,1.4 0 1 0 2.8,0a1.4,1.4 0 1 0 -2.8,0M553.6,247.0a1.4,1.4 0 1 0 2.8,0a1.4,1.4 0 1 0 -2.8,0M554.1,249.0a1.4,1.4 0 1 0 2.8,0a1.4,1.4 0 1 0 -2.8,0M554.6,251.5a1.4,1.4 0 1 0 2.8,0a1.4,1.4 0 1 0 -2.8,0M555.1,253.5a1.4,1.4 0 1 0 2.8,0a1.4,1.4 0 1 0 -2.8,0M555.6,255.5a1.4,1.4 0 1 0 2.8,0a1.4,1.4 0 1 0 -2.8,0M556.1,257.5a1.4,1.4 0 1 0 2.8,0a1.4,1.4 0 1 0 -2.8,0M557.1,260.0a1.4,1.4 0 1 0 2.8,0a1.4,1.4 0 1 0 -2.8,0M557.6,262.0a1.4,1.4 0 1 0 2.8,0a1.4,1.4 0 1 0 -2.8,0M558.1,264.0a1.4,1.4 0 1 0 2.8,0a1.4,1.4 0 1 0 -2.8,0M558.6,266.5a1.4,1.4 0 1 0 2.8,0a1.4,1.4 0 1 0 -2.8,0M558.6,268.5a1.4,1.4 0 1 0 2.8,0a1.4,1.4 0 1 0 -2.8,0M559.1,270.5a1.4,1.4 0 1 0 2.8,0a1.4,1.4 0 1 0 -2.8,0M559.6,272.5a1.4,1.4 0 1 0 2.8,0a1.4,1.4 0 1 0 -2.8,0M560.1,275.0a1.4,1.4 0 1 0 2.8,0a1.4,1.4 0 1 0 -2.8,0M560.6,277.0a1.4,1.4 0 1 0 2.8,0a1.4,1.4 0 1 0 -2.8,0M561.1,279.0a1.4,1.4 0 1 0 2.8,0a1.4,1.4 0 1 0 -2.8,0M561.6,281.5a1.4,1.4 0 1 0 2.8,0a1.4,1.4 0 1 0 -2.8,0M561.6,283.5a1.4,1.4 0 1 0 2.8,0a1.4,1.4 0 1 0 -2.8,0M562.1,285.5a1.4,1.4 0 1 0 2.8,0a1.4,1.4 0 1 0 -2.8,0M562.6,288.0a1.4,1.4 0 1 0 2.8,0a1.4,1.4 0 1 0 -2.8,0M562.6,290.0a1.4,1.4 0 1 0 2.8,0a1.4,1.4 0 1 0 -2.8,0M563.1,292.0a1.4,1.4 0 1 0 2.8,0a1.4,1.4 0 1 0 -2.8,0M563.6,294.5a1.4,1.4 0 1 0 2.8,0a1.4,1.4 0 1 0 -2.8,0M564.1,296.5a1.4,1.4 0 1 0 2.8,0a1.4,1.4 0 1 0 -2.8,0M564.1,298.5a1.4,1.4 0 1 0 2.8,0a1.4,1.4 0 1 0 -2.8,0M564.6,301.0a1.4,1.4 0 1 0 2.8,0a1.4,1.4 0 1 0 -2.8,0M565.1,303.0a1.4,1.4 0 1 0 2.8,0a1.4,1.4 0 1 0 -2.8,0M565.1,305.5a1.4,1.4 0 1 0 2.8,0a1.4,1.4 0 1 0 -2.8,0M565.6,307.5a1.4,1.4 0 1 0 2.8,0a1.4,1.4 0 1 0 -2.8,0M565.6,309.5a1.4,1.4 0 1 0 2.8,0a1.4,1.4 0 1 0 -2.8,0M566.1,312.0a1.4,1.4 0 1 0 2.8,0a1.4,1.4 0 1 0 -2.8,0M566.1,314.0a1.4,1.4 0 1 0 2.8,0a1.4,1.4 0 1 0 -2.8,0M566.6,316.0a1.4,1.4 0 1 0 2.8,0a1.4,1.4 0 1 0 -2.8,0M566.6,318.5a1.4,1.4 0 1 0 2.8,0a1.4,1.4 0 1 0 -2.8,0M566.6,320.5a1.4,1.4 0 1 0 2.8,0a1.4,1.4 0 1 0 -2.8,0M566.6,323.0a1.4,1.4 0 1 0 2.8,0a1.4,1.4 0 1 0 -2.8,0M567.1,325.0a1.4,1.4 0 1 0 2.8,0a1.4,1.4 0 1 0 -2.8,0M567.1,327.0a1.4,1.4 0 1 0 2.8,0a1.4,1.4 0 1 0 -2.8,0M567.1,329.5a1.4,1.4 0 1 0 2.8,0a1.4,1.4 0 1 0 -2.8,0M567.1,331.5a1.4,1.4 0 1 0 2.8,0a1.4,1.4 0 1 0 -2.8,0M567.1,334.0a1.4,1.4 0 1 0 2.8,0a1.4,1.4 0 1 0 -2.8,0M567.1,336.0a1.4,1.4 0 1 0 2.8,0a1.4,1.4 0 1 0 -2.8,0M567.1,338.0a1.4,1.4 0 1 0 2.8,0a1.4,1.4 0 1 0 -2.8,0M567.1,340.5a1.4,1.4 0 1 0 2.8,0a1.4,1.4 0 1 0 -2.8,0M567.6,342.5a1.4,1.4 0 1 0 2.8,0a1.4,1.4 0 1 0 -2.8,0M567.6,345.0a1.4,1.4 0 1 0 2.8,0a1.4,1.4 0 1 0 -2.8,0M567.6,347.0a1.4,1.4 0 1 0 2.8,0a1.4,1.4 0 1 0 -2.8,0M567.6,349.0a1.4,1.4 0 1 0 2.8,0a1.4,1.4 0 1 0 -2.8,0M567.6,351.5a1.4,1.4 0 1 0 2.8,0a1.4,1.4 0 1 0 -2.8,0M567.6,353.5a1.4,1.4 0 1 0 2.8,0a1.4,1.4 0 1 0 -2.8,0M567.6,356.0a1.4,1.4 0 1 0 2.8,0a1.4,1.4 0 1 0 -2.8,0M567.6,358.0a1.4,1.4 0 1 0 2.8,0a1.4,1.4 0 1 0 -2.8,0M567.6,360.0a1.4,1.4 0 1 0 2.8,0a1.4,1.4 0 1 0 -2.8,0M567.1,364.5a1.4,1.4 0 1 0 2.8,0a1.4,1.4 0 1 0 -2.8,0M567.1,367.0a1.4,1.4 0 1 0 2.8,0a1.4,1.4 0 1 0 -2.8,0M567.1,369.0a1.4,1.4 0 1 0 2.8,0a1.4,1.4 0 1 0 -2.8,0M567.1,371.0a1.4,1.4 0 1 0 2.8,0a1.4,1.4 0 1 0 -2.8,0M567.1,373.5a1.4,1.4 0 1 0 2.8,0a1.4,1.4 0 1 0 -2.8,0M566.6,375.5a1.4,1.4 0 1 0 2.8,0a1.4,1.4 0 1 0 -2.8,0M566.6,378.0a1.4,1.4 0 1 0 2.8,0a1.4,1.4 0 1 0 -2.8,0M566.6,380.0a1.4,1.4 0 1 0 2.8,0a1.4,1.4 0 1 0 -2.8,0M566.1,382.0a1.4,1.4 0 1 0 2.8,0a1.4,1.4 0 1 0 -2.8,0M566.1,384.5a1.4,1.4 0 1 0 2.8,0a1.4,1.4 0 1 0 -2.8,0M566.1,386.5a1.4,1.4 0 1 0 2.8,0a1.4,1.4 0 1 0 -2.8,0M565.6,388.5a1.4,1.4 0 1 0 2.8,0a1.4,1.4 0 1 0 -2.8,0M565.6,391.0a1.4,1.4 0 1 0 2.8,0a1.4,1.4 0 1 0 -2.8,0M565.6,393.0a1.4,1.4 0 1 0 2.8,0a1.4,1.4 0 1 0 -2.8,0M565.1,395.5a1.4,1.4 0 1 0 2.8,0a1.4,1.4 0 1 0 -2.8,0M565.1,397.5a1.4,1.4 0 1 0 2.8,0a1.4,1.4 0 1 0 -2.8,0M564.6,399.5a1.4,1.4 0 1 0 2.8,0a1.4,1.4 0 1 0 -2.8,0M564.1,404.0a1.4,1.4 0 1 0 2.8,0a1.4,1.4 0 1 0 -2.8,0M564.1,406.5a1.4,1.4 0 1 0 2.8,0a1.4,1.4 0 1 0 -2.8,0M564.1,408.5a1.4,1.4 0 1 0 2.8,0a1.4,1.4 0 1 0 -2.8,0M563.6,410.5a1.4,1.4 0 1 0 2.8,0a1.4,1.4 0 1 0 -2.8,0M563.6,413.0a1.4,1.4 0 1 0 2.8,0a1.4,1.4 0 1 0 -2.8,0M563.1,415.0a1.4,1.4 0 1 0 2.8,0a1.4,1.4 0 1 0 -2.8,0M563.1,417.0a1.4,1.4 0 1 0 2.8,0a1.4,1.4 0 1 0 -2.8,0M562.6,419.5a1.4,1.4 0 1 0 2.8,0a1.4,1.4 0 1 0 -2.8,0M562.1,421.5a1.4,1.4 0 1 0 2.8,0a1.4,1.4 0 1 0 -2.8,0M562.1,423.5a1.4,1.4 0 1 0 2.8,0a1.4,1.4 0 1 0 -2.8,0M561.6,426.0a1.4,1.4 0 1 0 2.8,0a1.4,1.4 0 1 0 -2.8,0M561.6,428.0a1.4,1.4 0 1 0 2.8,0a1.4,1.4 0 1 0 -2.8,0M561.1,430.5a1.4,1.4 0 1 0 2.8,0a1.4,1.4 0 1 0 -2.8,0M560.6,432.5a1.4,1.4 0 1 0 2.8,0a1.4,1.4 0 1 0 -2.8,0M559.6,439.0a1.4,1.4 0 1 0 2.8,0a1.4,1.4 0 1 0 -2.8,0M559.1,441.0a1.4,1.4 0 1 0 2.8,0a1.4,1.4 0 1 0 -2.8,0M558.6,443.0a1.4,1.4 0 1 0 2.8,0a1.4,1.4 0 1 0 -2.8,0M557.6,447.5a1.4,1.4 0 1 0 2.8,0a1.4,1.4 0 1 0 -2.8,0M557.1,449.5a1.4,1.4 0 1 0 2.8,0a1.4,1.4 0 1 0 -2.8,0M557.1,452.0a1.4,1.4 0 1 0 2.8,0a1.4,1.4 0 1 0 -2.8,0M556.6,454.0a1.4,1.4 0 1 0 2.8,0a1.4,1.4 0 1 0 -2.8,0M556.6,456.0a1.4,1.4 0 1 0 2.8,0a1.4,1.4 0 1 0 -2.8,0M556.1,458.5a1.4,1.4 0 1 0 2.8,0a1.4,1.4 0 1 0 -2.8,0M556.1,460.5a1.4,1.4 0 1 0 2.8,0a1.4,1.4 0 1 0 -2.8,0M555.6,463.0a1.4,1.4 0 1 0 2.8,0a1.4,1.4 0 1 0 -2.8,0M555.1,465.0a1.4,1.4 0 1 0 2.8,0a1.4,1.4 0 1 0 -2.8,0M554.6,467.0a1.4,1.4 0 1 0 2.8,0a1.4,1.4 0 1 0 -2.8,0M554.1,469.0a1.4,1.4 0 1 0 2.8,0a1.4,1.4 0 1 0 -2.8,0M553.6,471.5a1.4,1.4 0 1 0 2.8,0a1.4,1.4 0 1 0 -2.8,0M552.6,473.5a1.4,1.4 0 1 0 2.8,0a1.4,1.4 0 1 0 -2.8,0M551.6,475.5a1.4,1.4 0 1 0 2.8,0a1.4,1.4 0 1 0 -2.8,0M551.1,477.5a1.4,1.4 0 1 0 2.8,0a1.4,1.4 0 1 0 -2.8,0M550.1,479.5a1.4,1.4 0 1 0 2.8,0a1.4,1.4 0 1 0 -2.8,0M549.6,481.5a1.4,1.4 0 1 0 2.8,0a1.4,1.4 0 1 0 -2.8,0M549.1,483.5a1.4,1.4 0 1 0 2.8,0a1.4,1.4 0 1 0 -2.8,0M548.1,486.0a1.4,1.4 0 1 0 2.8,0a1.4,1.4 0 1 0 -2.8,0M547.6,488.0a1.4,1.4 0 1 0 2.8,0a1.4,1.4 0 1 0 -2.8,0M547.1,490.0a1.4,1.4 0 1 0 2.8,0a1.4,1.4 0 1 0 -2.8,0M546.1,492.0a1.4,1.4 0 1 0 2.8,0a1.4,1.4 0 1 0 -2.8,0M545.6,494.0a1.4,1.4 0 1 0 2.8,0a1.4,1.4 0 1 0 -2.8,0M545.1,496.5a1.4,1.4 0 1 0 2.8,0a1.4,1.4 0 1 0 -2.8,0M544.6,498.5a1.4,1.4 0 1 0 2.8,0a1.4,1.4 0 1 0 -2.8,0M543.6,500.5a1.4,1.4 0 1 0 2.8,0a1.4,1.4 0 1 0 -2.8,0M543.1,502.5a1.4,1.4 0 1 0 2.8,0a1.4,1.4 0 1 0 -2.8,0M542.6,505.0a1.4,1.4 0 1 0 2.8,0a1.4,1.4 0 1 0 -2.8,0M542.1,507.0a1.4,1.4 0 1 0 2.8,0a1.4,1.4 0 1 0 -2.8,0M541.6,509.0a1.4,1.4 0 1 0 2.8,0a1.4,1.4 0 1 0 -2.8,0M541.1,511.0a1.4,1.4 0 1 0 2.8,0a1.4,1.4 0 1 0 -2.8,0M540.6,513.5a1.4,1.4 0 1 0 2.8,0a1.4,1.4 0 1 0 -2.8,0M539.6,515.5a1.4,1.4 0 1 0 2.8,0a1.4,1.4 0 1 0 -2.8,0M539.1,517.5a1.4,1.4 0 1 0 2.8,0a1.4,1.4 0 1 0 -2.8,0M538.1,519.5a1.4,1.4 0 1 0 2.8,0a1.4,1.4 0 1 0 -2.8,0M537.1,521.5a1.4,1.4 0 1 0 2.8,0a1.4,1.4 0 1 0 -2.8,0M536.1,523.5a1.4,1.4 0 1 0 2.8,0a1.4,1.4 0 1 0 -2.8,0M534.1,527.5a1.4,1.4 0 1 0 2.8,0a1.4,1.4 0 1 0 -2.8,0M533.1,529.0a1.4,1.4 0 1 0 2.8,0a1.4,1.4 0 1 0 -2.8,0M532.1,531.0a1.4,1.4 0 1 0 2.8,0a1.4,1.4 0 1 0 -2.8,0M531.1,533.0a1.4,1.4 0 1 0 2.8,0a1.4,1.4 0 1 0 -2.8,0M530.1,535.0a1.4,1.4 0 1 0 2.8,0a1.4,1.4 0 1 0 -2.8,0M529.1,537.0a1.4,1.4 0 1 0 2.8,0a1.4,1.4 0 1 0 -2.8,0M528.1,539.0a1.4,1.4 0 1 0 2.8,0a1.4,1.4 0 1 0 -2.8,0M527.1,541.0a1.4,1.4 0 1 0 2.8,0a1.4,1.4 0 1 0 -2.8,0M525.1,545.0a1.4,1.4 0 1 0 2.8,0a1.4,1.4 0 1 0 -2.8,0M524.1,547.0a1.4,1.4 0 1 0 2.8,0a1.4,1.4 0 1 0 -2.8,0M523.1,549.0a1.4,1.4 0 1 0 2.8,0a1.4,1.4 0 1 0 -2.8,0M522.1,551.0a1.4,1.4 0 1 0 2.8,0a1.4,1.4 0 1 0 -2.8,0M521.1,553.0a1.4,1.4 0 1 0 2.8,0a1.4,1.4 0 1 0 -2.8,0M520.1,555.0a1.4,1.4 0 1 0 2.8,0a1.4,1.4 0 1 0 -2.8,0M519.1,556.5a1.4,1.4 0 1 0 2.8,0a1.4,1.4 0 1 0 -2.8,0M518.1,558.5a1.4,1.4 0 1 0 2.8,0a1.4,1.4 0 1 0 -2.8,0M517.1,560.5a1.4,1.4 0 1 0 2.8,0a1.4,1.4 0 1 0 -2.8,0M515.6,562.5a1.4,1.4 0 1 0 2.8,0a1.4,1.4 0 1 0 -2.8,0M514.6,564.5a1.4,1.4 0 1 0 2.8,0a1.4,1.4 0 1 0 -2.8,0M513.6,566.0a1.4,1.4 0 1 0 2.8,0a1.4,1.4 0 1 0 -2.8,0M512.1,568.0a1.4,1.4 0 1 0 2.8,0a1.4,1.4 0 1 0 -2.8,0M511.1,570.0a1.4,1.4 0 1 0 2.8,0a1.4,1.4 0 1 0 -2.8,0M510.1,571.5a1.4,1.4 0 1 0 2.8,0a1.4,1.4 0 1 0 -2.8,0M508.6,573.5a1.4,1.4 0 1 0 2.8,0a1.4,1.4 0 1 0 -2.8,0M507.6,575.5a1.4,1.4 0 1 0 2.8,0a1.4,1.4 0 1 0 -2.8,0M506.1,577.0a1.4,1.4 0 1 0 2.8,0a1.4,1.4 0 1 0 -2.8,0M505.1,579.0a1.4,1.4 0 1 0 2.8,0a1.4,1.4 0 1 0 -2.8,0M503.6,580.5a1.4,1.4 0 1 0 2.8,0a1.4,1.4 0 1 0 -2.8,0M502.1,582.5a1.4,1.4 0 1 0 2.8,0a1.4,1.4 0 1 0 -2.8,0M501.1,584.0a1.4,1.4 0 1 0 2.8,0a1.4,1.4 0 1 0 -2.8,0M499.6,586.0a1.4,1.4 0 1 0 2.8,0a1.4,1.4 0 1 0 -2.8,0M498.1,587.5a1.4,1.4 0 1 0 2.8,0a1.4,1.4 0 1 0 -2.8,0M496.6,589.0a1.4,1.4 0 1 0 2.8,0a1.4,1.4 0 1 0 -2.8,0M495.1,591.0a1.4,1.4 0 1 0 2.8,0a1.4,1.4 0 1 0 -2.8,0M493.6,592.5a1.4,1.4 0 1 0 2.8,0a1.4,1.4 0 1 0 -2.8,0M492.1,594.0a1.4,1.4 0 1 0 2.8,0a1.4,1.4 0 1 0 -2.8,0M490.6,595.5a1.4,1.4 0 1 0 2.8,0a1.4,1.4 0 1 0 -2.8,0M489.1,597.0a1.4,1.4 0 1 0 2.8,0a1.4,1.4 0 1 0 -2.8,0M487.1,598.5a1.4,1.4 0 1 0 2.8,0a1.4,1.4 0 1 0 -2.8,0M485.1,599.5a1.4,1.4 0 1 0 2.8,0a1.4,1.4 0 1 0 -2.8,0M483.6,600.5a1.4,1.4 0 1 0 2.8,0a1.4,1.4 0 1 0 -2.8,0M481.6,601.5a1.4,1.4 0 1 0 2.8,0a1.4,1.4 0 1 0 -2.8,0M479.6,602.5a1.4,1.4 0 1 0 2.8,0a1.4,1.4 0 1 0 -2.8,0M477.6,603.5a1.4,1.4 0 1 0 2.8,0a1.4,1.4 0 1 0 -2.8,0M475.6,604.5a1.4,1.4 0 1 0 2.8,0a1.4,1.4 0 1 0 -2.8,0M471.6,606.5a1.4,1.4 0 1 0 2.8,0a1.4,1.4 0 1 0 -2.8,0M467.6,608.0a1.4,1.4 0 1 0 2.8,0a1.4,1.4 0 1 0 -2.8,0M465.1,608.5a1.4,1.4 0 1 0 2.8,0a1.4,1.4 0 1 0 -2.8,0M463.1,609.0a1.4,1.4 0 1 0 2.8,0a1.4,1.4 0 1 0 -2.8,0M461.1,608.5a1.4,1.4 0 1 0 2.8,0a1.4,1.4 0 1 0 -2.8,0M456.6,608.0a1.4,1.4 0 1 0 2.8,0a1.4,1.4 0 1 0 -2.8,0M454.6,607.5a1.4,1.4 0 1 0 2.8,0a1.4,1.4 0 1 0 -2.8,0M450.1,606.5a1.4,1.4 0 1 0 2.8,0a1.4,1.4 0 1 0 -2.8,0M448.1,605.5a1.4,1.4 0 1 0 2.8,0a1.4,1.4 0 1 0 -2.8,0M446.1,605.0a1.4,1.4 0 1 0 2.8,0a1.4,1.4 0 1 0 -2.8,0M441.6,604.0a1.4,1.4 0 1 0 2.8,0a1.4,1.4 0 1 0 -2.8,0M439.6,603.0a1.4,1.4 0 1 0 2.8,0a1.4,1.4 0 1 0 -2.8,0M437.6,602.5a1.4,1.4 0 1 0 2.8,0a1.4,1.4 0 1 0 -2.8,0M435.6,601.5a1.4,1.4 0 1 0 2.8,0a1.4,1.4 0 1 0 -2.8,0M433.6,601.0a1.4,1.4 0 1 0 2.8,0a1.4,1.4 0 1 0 -2.8,0M431.6,600.0a1.4,1.4 0 1 0 2.8,0a1.4,1.4 0 1 0 -2.8,0M429.6,599.0a1.4,1.4 0 1 0 2.8,0a1.4,1.4 0 1 0 -2.8,0M427.6,598.0a1.4,1.4 0 1 0 2.8,0a1.4,1.4 0 1 0 -2.8,0M425.6,596.5a1.4,1.4 0 1 0 2.8,0a1.4,1.4 0 1 0 -2.8,0M424.1,595.5a1.4,1.4 0 1 0 2.8,0a1.4,1.4 0 1 0 -2.8,0M421.1,592.0a1.4,1.4 0 1 0 2.8,0a1.4,1.4 0 1 0 -2.8,0M420.1,590.0a1.4,1.4 0 1 0 2.8,0a1.4,1.4 0 1 0 -2.8,0M419.1,588.0a1.4,1.4 0 1 0 2.8,0a1.4,1.4 0 1 0 -2.8,0M418.1,586.0a1.4,1.4 0 1 0 2.8,0a1.4,1.4 0 1 0 -2.8,0M417.1,584.5a1.4,1.4 0 1 0 2.8,0a1.4,1.4 0 1 0 -2.8,0M415.6,582.5a1.4,1.4 0 1 0 2.8,0a1.4,1.4 0 1 0 -2.8,0M414.6,580.5a1.4,1.4 0 1 0 2.8,0a1.4,1.4 0 1 0 -2.8,0M413.6,578.5a1.4,1.4 0 1 0 2.8,0a1.4,1.4 0 1 0 -2.8,0M412.1,577.0a1.4,1.4 0 1 0 2.8,0a1.4,1.4 0 1 0 -2.8,0M411.1,575.0a1.4,1.4 0 1 0 2.8,0a1.4,1.4 0 1 0 -2.8,0M410.1,573.0a1.4,1.4 0 1 0 2.8,0a1.4,1.4 0 1 0 -2.8,0M409.1,571.0a1.4,1.4 0 1 0 2.8,0a1.4,1.4 0 1 0 -2.8,0M408.1,569.0a1.4,1.4 0 1 0 2.8,0a1.4,1.4 0 1 0 -2.8,0M407.1,567.0a1.4,1.4 0 1 0 2.8,0a1.4,1.4 0 1 0 -2.8,0M406.1,565.0a1.4,1.4 0 1 0 2.8,0a1.4,1.4 0 1 0 -2.8,0M405.1,563.5a1.4,1.4 0 1 0 2.8,0a1.4,1.4 0 1 0 -2.8,0M404.1,561.5a1.4,1.4 0 1 0 2.8,0a1.4,1.4 0 1 0 -2.8,0M403.1,559.5a1.4,1.4 0 1 0 2.8,0a1.4,1.4 0 1 0 -2.8,0M402.1,557.5a1.4,1.4 0 1 0 2.8,0a1.4,1.4 0 1 0 -2.8,0M401.1,555.5a1.4,1.4 0 1 0 2.8,0a1.4,1.4 0 1 0 -2.8,0M400.1,553.5a1.4,1.4 0 1 0 2.8,0a1.4,1.4 0 1 0 -2.8,0M399.1,551.5a1.4,1.4 0 1 0 2.8,0a1.4,1.4 0 1 0 -2.8,0M398.1,549.5a1.4,1.4 0 1 0 2.8,0a1.4,1.4 0 1 0 -2.8,0M397.1,547.5a1.4,1.4 0 1 0 2.8,0a1.4,1.4 0 1 0 -2.8,0M396.6,545.5a1.4,1.4 0 1 0 2.8,0a1.4,1.4 0 1 0 -2.8,0M395.6,543.5a1.4,1.4 0 1 0 2.8,0a1.4,1.4 0 1 0 -2.8,0M394.6,541.5a1.4,1.4 0 1 0 2.8,0a1.4,1.4 0 1 0 -2.8,0M394.1,539.0a1.4,1.4 0 1 0 2.8,0a1.4,1.4 0 1 0 -2.8,0M393.1,537.0a1.4,1.4 0 1 0 2.8,0a1.4,1.4 0 1 0 -2.8,0M392.6,535.0a1.4,1.4 0 1 0 2.8,0a1.4,1.4 0 1 0 -2.8,0M392.1,533.0a1.4,1.4 0 1 0 2.8,0a1.4,1.4 0 1 0 -2.8,0M391.6,531.0a1.4,1.4 0 1 0 2.8,0a1.4,1.4 0 1 0 -2.8,0M391.1,528.5a1.4,1.4 0 1 0 2.8,0a1.4,1.4 0 1 0 -2.8,0M390.6,526.5a1.4,1.4 0 1 0 2.8,0a1.4,1.4 0 1 0 -2.8,0M390.1,524.5a1.4,1.4 0 1 0 2.8,0a1.4,1.4 0 1 0 -2.8,0M389.6,522.0a1.4,1.4 0 1 0 2.8,0a1.4,1.4 0 1 0 -2.8,0M389.1,520.0a1.4,1.4 0 1 0 2.8,0a1.4,1.4 0 1 0 -2.8,0M388.6,518.0a1.4,1.4 0 1 0 2.8,0a1.4,1.4 0 1 0 -2.8,0M388.6,515.5a1.4,1.4 0 1 0 2.8,0a1.4,1.4 0 1 0 -2.8,0M388.1,513.5a1.4,1.4 0 1 0 2.8,0a1.4,1.4 0 1 0 -2.8,0M387.6,511.5a1.4,1.4 0 1 0 2.8,0a1.4,1.4 0 1 0 -2.8,0M387.1,509.0a1.4,1.4 0 1 0 2.8,0a1.4,1.4 0 1 0 -2.8,0M386.6,507.0a1.4,1.4 0 1 0 2.8,0a1.4,1.4 0 1 0 -2.8,0M386.6,505.0a1.4,1.4 0 1 0 2.8,0a1.4,1.4 0 1 0 -2.8,0M386.1,503.0a1.4,1.4 0 1 0 2.8,0a1.4,1.4 0 1 0 -2.8,0M385.6,500.5a1.4,1.4 0 1 0 2.8,0a1.4,1.4 0 1 0 -2.8,0M384.6,496.5a1.4,1.4 0 1 0 2.8,0a1.4,1.4 0 1 0 -2.8,0M384.1,494.0a1.4,1.4 0 1 0 2.8,0a1.4,1.4 0 1 0 -2.8,0M383.6,492.0a1.4,1.4 0 1 0 2.8,0a1.4,1.4 0 1 0 -2.8,0M383.1,490.0a1.4,1.4 0 1 0 2.8,0a1.4,1.4 0 1 0 -2.8,0M382.6,488.0a1.4,1.4 0 1 0 2.8,0a1.4,1.4 0 1 0 -2.8,0M382.1,485.5a1.4,1.4 0 1 0 2.8,0a1.4,1.4 0 1 0 -2.8,0M381.6,483.5a1.4,1.4 0 1 0 2.8,0a1.4,1.4 0 1 0 -2.8,0M381.1,481.5a1.4,1.4 0 1 0 2.8,0a1.4,1.4 0 1 0 -2.8,0M380.6,479.0a1.4,1.4 0 1 0 2.8,0a1.4,1.4 0 1 0 -2.8,0M380.6,477.0a1.4,1.4 0 1 0 2.8,0a1.4,1.4 0 1 0 -2.8,0M380.1,475.0a1.4,1.4 0 1 0 2.8,0a1.4,1.4 0 1 0 -2.8,0M380.1,472.5a1.4,1.4 0 1 0 2.8,0a1.4,1.4 0 1 0 -2.8,0M379.6,470.5a1.4,1.4 0 1 0 2.8,0a1.4,1.4 0 1 0 -2.8,0M379.6,468.0a1.4,1.4 0 1 0 2.8,0a1.4,1.4 0 1 0 -2.8,0M379.1,466.0a1.4,1.4 0 1 0 2.8,0a1.4,1.4 0 1 0 -2.8,0M379.1,464.0a1.4,1.4 0 1 0 2.8,0a1.4,1.4 0 1 0 -2.8,0M379.1,461.5a1.4,1.4 0 1 0 2.8,0a1.4,1.4 0 1 0 -2.8,0M378.6,459.5a1.4,1.4 0 1 0 2.8,0a1.4,1.4 0 1 0 -2.8,0M378.6,457.0a1.4,1.4 0 1 0 2.8,0a1.4,1.4 0 1 0 -2.8,0M378.6,455.0a1.4,1.4 0 1 0 2.8,0a1.4,1.4 0 1 0 -2.8,0M378.1,453.0a1.4,1.4 0 1 0 2.8,0a1.4,1.4 0 1 0 -2.8,0M378.1,450.5a1.4,1.4 0 1 0 2.8,0a1.4,1.4 0 1 0 -2.8,0M378.1,448.5a1.4,1.4 0 1 0 2.8,0a1.4,1.4 0 1 0 -2.8,0M377.6,446.5a1.4,1.4 0 1 0 2.8,0a1.4,1.4 0 1 0 -2.8,0M377.6,444.0a1.4,1.4 0 1 0 2.8,0a1.4,1.4 0 1 0 -2.8,0M377.1,442.0a1.4,1.4 0 1 0 2.8,0a1.4,1.4 0 1 0 -2.8,0M377.1,439.5a1.4,1.4 0 1 0 2.8,0a1.4,1.4 0 1 0 -2.8,0M377.1,437.5a1.4,1.4 0 1 0 2.8,0a1.4,1.4 0 1 0 -2.8,0M376.6,435.5a1.4,1.4 0 1 0 2.8,0a1.4,1.4 0 1 0 -2.8,0M376.6,433.0a1.4,1.4 0 1 0 2.8,0a1.4,1.4 0 1 0 -2.8,0M376.6,431.0a1.4,1.4 0 1 0 2.8,0a1.4,1.4 0 1 0 -2.8,0M376.1,428.5a1.4,1.4 0 1 0 2.8,0a1.4,1.4 0 1 0 -2.8,0M376.1,426.5a1.4,1.4 0 1 0 2.8,0a1.4,1.4 0 1 0 -2.8,0M376.1,424.5a1.4,1.4 0 1 0 2.8,0a1.4,1.4 0 1 0 -2.8,0M376.1,422.0a1.4,1.4 0 1 0 2.8,0a1.4,1.4 0 1 0 -2.8,0M376.1,420.0a1.4,1.4 0 1 0 2.8,0a1.4,1.4 0 1 0 -2.8,0M375.6,417.5a1.4,1.4 0 1 0 2.8,0a1.4,1.4 0 1 0 -2.8,0M375.6,413.5a1.4,1.4 0 1 0 2.8,0a1.4,1.4 0 1 0 -2.8,0M375.6,411.0a1.4,1.4 0 1 0 2.8,0a1.4,1.4 0 1 0 -2.8,0M375.6,409.0a1.4,1.4 0 1 0 2.8,0a1.4,1.4 0 1 0 -2.8,0M375.6,407.0a1.4,1.4 0 1 0 2.8,0a1.4,1.4 0 1 0 -2.8,0M375.6,404.5a1.4,1.4 0 1 0 2.8,0a1.4,1.4 0 1 0 -2.8,0M375.6,402.5a1.4,1.4 0 1 0 2.8,0a1.4,1.4 0 1 0 -2.8,0M375.6,400.0a1.4,1.4 0 1 0 2.8,0a1.4,1.4 0 1 0 -2.8,0M375.1,398.0a1.4,1.4 0 1 0 2.8,0a1.4,1.4 0 1 0 -2.8,0M375.1,396.0a1.4,1.4 0 1 0 2.8,0a1.4,1.4 0 1 0 -2.8,0M375.1,393.5a1.4,1.4 0 1 0 2.8,0a1.4,1.4 0 1 0 -2.8,0M375.1,391.5a1.4,1.4 0 1 0 2.8,0a1.4,1.4 0 1 0 -2.8,0M375.1,389.0a1.4,1.4 0 1 0 2.8,0a1.4,1.4 0 1 0 -2.8,0M375.1,387.0a1.4,1.4 0 1 0 2.8,0a1.4,1.4 0 1 0 -2.8,0M375.1,385.0a1.4,1.4 0 1 0 2.8,0a1.4,1.4 0 1 0 -2.8,0M375.1,382.5a1.4,1.4 0 1 0 2.8,0a1.4,1.4 0 1 0 -2.8,0M375.1,380.5a1.4,1.4 0 1 0 2.8,0a1.4,1.4 0 1 0 -2.8,0M375.1,378.0a1.4,1.4 0 1 0 2.8,0a1.4,1.4 0 1 0 -2.8,0M375.1,376.0a1.4,1.4 0 1 0 2.8,0a1.4,1.4 0 1 0 -2.8,0M375.1,374.0a1.4,1.4 0 1 0 2.8,0a1.4,1.4 0 1 0 -2.8,0M375.1,371.5a1.4,1.4 0 1 0 2.8,0a1.4,1.4 0 1 0 -2.8,0M375.1,369.5a1.4,1.4 0 1 0 2.8,0a1.4,1.4 0 1 0 -2.8,0M375.6,367.0a1.4,1.4 0 1 0 2.8,0a1.4,1.4 0 1 0 -2.8,0M375.6,365.0a1.4,1.4 0 1 0 2.8,0a1.4,1.4 0 1 0 -2.8,0M375.6,363.0a1.4,1.4 0 1 0 2.8,0a1.4,1.4 0 1 0 -2.8,0M375.6,360.5a1.4,1.4 0 1 0 2.8,0a1.4,1.4 0 1 0 -2.8,0M375.6,356.0a1.4,1.4 0 1 0 2.8,0a1.4,1.4 0 1 0 -2.8,0M376.1,354.0a1.4,1.4 0 1 0 2.8,0a1.4,1.4 0 1 0 -2.8,0M376.1,352.0a1.4,1.4 0 1 0 2.8,0a1.4,1.4 0 1 0 -2.8,0M376.1,349.5a1.4,1.4 0 1 0 2.8,0a1.4,1.4 0 1 0 -2.8,0M376.6,347.5a1.4,1.4 0 1 0 2.8,0a1.4,1.4 0 1 0 -2.8,0M376.6,345.0a1.4,1.4 0 1 0 2.8,0a1.4,1.4 0 1 0 -2.8,0M376.6,343.0a1.4,1.4 0 1 0 2.8,0a1.4,1.4 0 1 0 -2.8,0M377.1,341.0a1.4,1.4 0 1 0 2.8,0a1.4,1.4 0 1 0 -2.8,0M377.1,338.5a1.4,1.4 0 1 0 2.8,0a1.4,1.4 0 1 0 -2.8,0M377.6,336.5a1.4,1.4 0 1 0 2.8,0a1.4,1.4 0 1 0 -2.8,0M377.6,334.5a1.4,1.4 0 1 0 2.8,0a1.4,1.4 0 1 0 -2.8,0M378.1,332.0a1.4,1.4 0 1 0 2.8,0a1.4,1.4 0 1 0 -2.8,0M378.1,330.0a1.4,1.4 0 1 0 2.8,0a1.4,1.4 0 1 0 -2.8,0M378.6,327.5a1.4,1.4 0 1 0 2.8,0a1.4,1.4 0 1 0 -2.8,0M379.1,325.5a1.4,1.4 0 1 0 2.8,0a1.4,1.4 0 1 0 -2.8,0M379.1,323.5a1.4,1.4 0 1 0 2.8,0a1.4,1.4 0 1 0 -2.8,0M379.6,321.0a1.4,1.4 0 1 0 2.8,0a1.4,1.4 0 1 0 -2.8,0M379.6,319.0a1.4,1.4 0 1 0 2.8,0a1.4,1.4 0 1 0 -2.8,0M380.1,317.0a1.4,1.4 0 1 0 2.8,0a1.4,1.4 0 1 0 -2.8,0M380.6,314.5a1.4,1.4 0 1 0 2.8,0a1.4,1.4 0 1 0 -2.8,0M380.6,312.5a1.4,1.4 0 1 0 2.8,0a1.4,1.4 0 1 0 -2.8,0M381.1,310.5a1.4,1.4 0 1 0 2.8,0a1.4,1.4 0 1 0 -2.8,0M381.1,308.0a1.4,1.4 0 1 0 2.8,0a1.4,1.4 0 1 0 -2.8,0M381.6,306.0a1.4,1.4 0 1 0 2.8,0a1.4,1.4 0 1 0 -2.8,0M382.1,303.5a1.4,1.4 0 1 0 2.8,0a1.4,1.4 0 1 0 -2.8,0M382.1,301.5a1.4,1.4 0 1 0 2.8,0a1.4,1.4 0 1 0 -2.8,0M382.6,299.5a1.4,1.4 0 1 0 2.8,0a1.4,1.4 0 1 0 -2.8,0M383.1,297.0a1.4,1.4 0 1 0 2.8,0a1.4,1.4 0 1 0 -2.8,0M383.1,295.0a1.4,1.4 0 1 0 2.8,0a1.4,1.4 0 1 0 -2.8,0M383.6,293.0a1.4,1.4 0 1 0 2.8,0a1.4,1.4 0 1 0 -2.8,0M384.1,290.5a1.4,1.4 0 1 0 2.8,0a1.4,1.4 0 1 0 -2.8,0M384.6,288.5a1.4,1.4 0 1 0 2.8,0a1.4,1.4 0 1 0 -2.8,0M384.6,286.5a1.4,1.4 0 1 0 2.8,0a1.4,1.4 0 1 0 -2.8,0M385.1,284.0a1.4,1.4 0 1 0 2.8,0a1.4,1.4 0 1 0 -2.8,0M385.6,282.0a1.4,1.4 0 1 0 2.8,0a1.4,1.4 0 1 0 -2.8,0M386.1,280.0a1.4,1.4 0 1 0 2.8,0a1.4,1.4 0 1 0 -2.8,0M386.6,277.5a1.4,1.4 0 1 0 2.8,0a1.4,1.4 0 1 0 -2.8,0M386.6,275.5a1.4,1.4 0 1 0 2.8,0a1.4,1.4 0 1 0 -2.8,0M387.1,273.5a1.4,1.4 0 1 0 2.8,0a1.4,1.4 0 1 0 -2.8,0M387.6,271.5a1.4,1.4 0 1 0 2.8,0a1.4,1.4 0 1 0 -2.8,0M388.1,269.0a1.4,1.4 0 1 0 2.8,0a1.4,1.4 0 1 0 -2.8,0M388.6,267.0a1.4,1.4 0 1 0 2.8,0a1.4,1.4 0 1 0 -2.8,0M389.1,265.0a1.4,1.4 0 1 0 2.8,0a1.4,1.4 0 1 0 -2.8,0M389.6,262.5a1.4,1.4 0 1 0 2.8,0a1.4,1.4 0 1 0 -2.8,0M390.1,260.5a1.4,1.4 0 1 0 2.8,0a1.4,1.4 0 1 0 -2.8,0M391.1,258.5a1.4,1.4 0 1 0 2.8,0a1.4,1.4 0 1 0 -2.8,0M392.6,254.5a1.4,1.4 0 1 0 2.8,0a1.4,1.4 0 1 0 -2.8,0M393.1,252.5a1.4,1.4 0 1 0 2.8,0a1.4,1.4 0 1 0 -2.8,0M394.1,250.0a1.4,1.4 0 1 0 2.8,0a1.4,1.4 0 1 0 -2.8,0M394.6,248.0a1.4,1.4 0 1 0 2.8,0a1.4,1.4 0 1 0 -2.8,0M395.6,246.0a1.4,1.4 0 1 0 2.8,0a1.4,1.4 0 1 0 -2.8,0M396.1,244.0a1.4,1.4 0 1 0 2.8,0a1.4,1.4 0 1 0 -2.8,0M397.1,242.0a1.4,1.4 0 1 0 2.8,0a1.4,1.4 0 1 0 -2.8,0M397.6,240.0a1.4,1.4 0 1 0 2.8,0a1.4,1.4 0 1 0 -2.8,0M398.6,238.0a1.4,1.4 0 1 0 2.8,0a1.4,1.4 0 1 0 -2.8,0M399.1,235.5a1.4,1.4 0 1 0 2.8,0a1.4,1.4 0 1 0 -2.8,0M400.1,233.5a1.4,1.4 0 1 0 2.8,0a1.4,1.4 0 1 0 -2.8,0M400.6,231.5a1.4,1.4 0 1 0 2.8,0a1.4,1.4 0 1 0 -2.8,0M402.6,227.5a1.4,1.4 0 1 0 2.8,0a1.4,1.4 0 1 0 -2.8,0M403.1,225.5a1.4,1.4 0 1 0 2.8,0a1.4,1.4 0 1 0 -2.8,0M404.1,223.5a1.4,1.4 0 1 0 2.8,0a1.4,1.4 0 1 0 -2.8,0M405.1,221.5a1.4,1.4 0 1 0 2.8,0a1.4,1.4 0 1 0 -2.8,0M406.1,219.5a1.4,1.4 0 1 0 2.8,0a1.4,1.4 0 1 0 -2.8,0M406.6,217.5a1.4,1.4 0 1 0 2.8,0a1.4,1.4 0 1 0 -2.8,0M407.6,215.5a1.4,1.4 0 1 0 2.8,0a1.4,1.4 0 1 0 -2.8,0M408.6,213.5a1.4,1.4 0 1 0 2.8,0a1.4,1.4 0 1 0 -2.8,0M409.6,211.5a1.4,1.4 0 1 0 2.8,0a1.4,1.4 0 1 0 -2.8,0M411.1,209.5a1.4,1.4 0 1 0 2.8,0a1.4,1.4 0 1 0 -2.8,0M412.1,207.5a1.4,1.4 0 1 0 2.8,0a1.4,1.4 0 1 0 -2.8,0M413.1,206.0a1.4,1.4 0 1 0 2.8,0a1.4,1.4 0 1 0 -2.8,0M414.1,204.0a1.4,1.4 0 1 0 2.8,0a1.4,1.4 0 1 0 -2.8,0M415.1,202.0a1.4,1.4 0 1 0 2.8,0a1.4,1.4 0 1 0 -2.8,0M416.1,200.0a1.4,1.4 0 1 0 2.8,0a1.4,1.4 0 1 0 -2.8,0M417.6,198.0a1.4,1.4 0 1 0 2.8,0a1.4,1.4 0 1 0 -2.8,0M418.6,196.5a1.4,1.4 0 1 0 2.8,0a1.4,1.4 0 1 0 -2.8,0M420.1,195.0a1.4,1.4 0 1 0 2.8,0a1.4,1.4 0 1 0 -2.8,0M421.6,193.0a1.4,1.4 0 1 0 2.8,0a1.4,1.4 0 1 0 -2.8,0M424.6,189.5a1.4,1.4 0 1 0 2.8,0a1.4,1.4 0 1 0 -2.8,0M425.6,188.0a1.4,1.4 0 1 0 2.8,0a1.4,1.4 0 1 0 -2.8,0M427.1,186.0a1.4,1.4 0 1 0 2.8,0a1.4,1.4 0 1 0 -2.8,0M428.1,184.5a1.4,1.4 0 1 0 2.8,0a1.4,1.4 0 1 0 -2.8,0M429.6,183.0a1.4,1.4 0 1 0 2.8,0a1.4,1.4 0 1 0 -2.8,0M431.6,181.5a1.4,1.4 0 1 0 2.8,0a1.4,1.4 0 1 0 -2.8,0M433.1,180.0a1.4,1.4 0 1 0 2.8,0a1.4,1.4 0 1 0 -2.8,0M435.1,178.5a1.4,1.4 0 1 0 2.8,0a1.4,1.4 0 1 0 -2.8,0M436.6,177.0a1.4,1.4 0 1 0 2.8,0a1.4,1.4 0 1 0 -2.8,0M440.1,174.5a1.4,1.4 0 1 0 2.8,0a1.4,1.4 0 1 0 -2.8,0M441.6,173.0a1.4,1.4 0 1 0 2.8,0a1.4,1.4 0 1 0 -2.8,0M443.1,171.5a1.4,1.4 0 1 0 2.8,0a1.4,1.4 0 1 0 -2.8,0M445.1,170.0a1.4,1.4 0 1 0 2.8,0a1.4,1.4 0 1 0 -2.8,0M447.1,169.0a1.4,1.4 0 1 0 2.8,0a1.4,1.4 0 1 0 -2.8,0M448.6,168.0a1.4,1.4 0 1 0 2.8,0a1.4,1.4 0 1 0 -2.8,0M450.6,166.5a1.4,1.4 0 1 0 2.8,0a1.4,1.4 0 1 0 -2.8,0M452.1,165.0a1.4,1.4 0 1 0 2.8,0a1.4,1.4 0 1 0 -2.8,0M453.6,163.5a1.4,1.4 0 1 0 2.8,0a1.4,1.4 0 1 0 -2.8,0" fill="none" stroke="#f2bed2" stroke-width="1.15"/><path d="M846.5,370.5 L872,357.5 L872,383.5 Z" fill="#fff"/><path d="M872,357.5 L846.5,370.5 L872,383.5" fill="none" stroke="#1010e0" stroke-width="1.6"/><line x1="871.5" y1="357" x2="871.5" y2="384" stroke="#f0a0b0" stroke-width="1" /><line x1="848" y1="370.5" x2="874" y2="370.5" stroke="#a0a0a0" stroke-width="1" /><line x1="858.5" y1="367" x2="858.5" y2="374" stroke="#a0a0a0" stroke-width="1" /><text x="866" y="374.82" font-size="12" fill="#b8d030" text-anchor="middle" font-weight="bold" font-family="Liberation Sans, sans-serif" >M</text><rect x="838.5" y="574.5" width="11" height="11" fill="#e8e8e8" stroke="#888" stroke-width="1"/><text x="73" y="92.46" font-size="11" fill="#fff" text-anchor="start" font-weight="normal" font-family="Liberation Sans, sans-serif" >chA</text><rect x="94" y="85" width="13" height="6" fill="#19d0e8" /><text x="121" y="92.46" font-size="11" fill="#fff" text-anchor="start" font-weight="normal" font-family="Liberation Sans, sans-serif" >chB</text><rect x="143" y="85" width="13" height="6" fill="#f0f000" /><text x="310" y="94.96" font-size="11" fill="#fff" text-anchor="start" font-weight="normal" font-family="Liberation Sans, sans-serif" >State: Live</text><rect x="630" y="84" width="43" height="13" fill="#0a0ae8" /><text x="633" y="94.46" font-size="11" fill="#fff" text-anchor="start" font-weight="normal" font-family="Liberation Sans, sans-serif" >11.3 bit</text><text x="678" y="94.82" font-size="12" fill="#fff" text-anchor="start" font-weight="normal" font-family="Liberation Sans, sans-serif" >采样率:</text><rect x="716" y="84" width="49" height="13" fill="#e08a10" /><text x="717" y="94.46" font-size="11" fill="#fff" text-anchor="start" font-weight="normal" font-family="Liberation Sans, sans-serif" >2.4M / 96</text><text x="767" y="94.46" font-size="11" fill="#fff" text-anchor="start" font-weight="normal" font-family="Liberation Sans, sans-serif" >S/s. | 缓冲区: 256K.</text><text x="24" y="100.46" font-size="11" fill="#1890aa" text-anchor="start" font-weight="normal" font-family="Liberation Sans, sans-serif" >chA:V</text><text x="64" y="153.96" font-size="11" fill="#1890aa" text-anchor="end" font-weight="normal" font-family="Liberation Sans, sans-serif" >2.000</text><text x="64" y="166.96" font-size="11" fill="#d88a3a" text-anchor="end" font-weight="normal" font-family="Liberation Sans, sans-serif" >2.000</text><text x="64" y="207.46" font-size="11" fill="#1890aa" text-anchor="end" font-weight="normal" font-family="Liberation Sans, sans-serif" >1.500</text><text x="64" y="220.46" font-size="11" fill="#d88a3a" text-anchor="end" font-weight="normal" font-family="Liberation Sans, sans-serif" >1.500</text><text x="64" y="260.96" font-size="11" fill="#1890aa" text-anchor="end" font-weight="normal" font-family="Liberation Sans, sans-serif" >1.000</text><text x="64" y="273.96" font-size="11" fill="#d88a3a" text-anchor="end" font-weight="normal" font-family="Liberation Sans, sans-serif" >1.000</text><text x="64" y="314.46" font-size="11" fill="#1890aa" text-anchor="end" font-weight="normal" font-family="Liberation Sans, sans-serif" >0.500</text><text x="64" y="327.46" font-size="11" fill="#d88a3a" text-anchor="end" font-weight="normal" font-family="Liberation Sans, sans-serif" >0.500</text><text x="64" y="367.96" font-size="11" fill="#1890aa" text-anchor="end" font-weight="normal" font-family="Liberation Sans, sans-serif" >0.000</text><text x="64" y="380.96" font-size="11" fill="#d88a3a" text-anchor="end" font-weight="normal" font-family="Liberation Sans, sans-serif" >0.000</text><text x="64" y="421.46" font-size="11" fill="#1890aa" text-anchor="end" font-weight="normal" font-family="Liberation Sans, sans-serif" >- 0.500</text><text x="64" y="434.46" font-size="11" fill="#d88a3a" text-anchor="end" font-weight="normal" font-family="Liberation Sans, sans-serif" >- 0.500</text><text x="64" y="474.96" font-size="11" fill="#1890aa" text-anchor="end" font-weight="normal" font-family="Liberation Sans, sans-serif" >- 1.000</text><text x="64" y="487.96" font-size="11" fill="#d88a3a" text-anchor="end" font-weight="normal" font-family="Liberation Sans, sans-serif" >- 1.000</text><text x="64" y="528.46" font-size="11" fill="#1890aa" text-anchor="end" font-weight="normal" font-family="Liberation Sans, sans-serif" >- 1.500</text><text x="64" y="541.46" font-size="11" fill="#d88a3a" text-anchor="end" font-weight="normal" font-family="Liberation Sans, sans-serif" >- 1.500</text><text x="64" y="581.96" font-size="11" fill="#1890aa" text-anchor="end" font-weight="normal" font-family="Liberation Sans, sans-serif" >- 2.000</text><text x="64" y="594.96" font-size="11" fill="#d88a3a" text-anchor="end" font-weight="normal" font-family="Liberation Sans, sans-serif" >- 2.000</text><text x="24" y="635.96" font-size="11" fill="#d88a3a" text-anchor="start" font-weight="normal" font-family="Liberation Sans, sans-serif" >chB:V</text><text x="82" y="654.78" font-size="10.5" fill="#58626c" text-anchor="middle" font-weight="normal" font-family="Liberation Sans, sans-serif" >0.00</text><text x="148.0" y="654.78" font-size="10.5" fill="#58626c" text-anchor="middle" font-weight="normal" font-family="Liberation Sans, sans-serif" >2.00</text><text x="228.7" y="654.78" font-size="10.5" fill="#58626c" text-anchor="middle" font-weight="normal" font-family="Liberation Sans, sans-serif" >4.00</text><text x="309.4" y="654.78" font-size="10.5" fill="#58626c" text-anchor="middle" font-weight="normal" font-family="Liberation Sans, sans-serif" >6.00</text><text x="390.1" y="654.78" font-size="10.5" fill="#58626c" text-anchor="middle" font-weight="normal" font-family="Liberation Sans, sans-serif" >8.00</text><text x="474.8" y="654.78" font-size="10.5" fill="#58626c" text-anchor="middle" font-weight="normal" font-family="Liberation Sans, sans-serif" >10.00</text><text x="551.5" y="654.78" font-size="10.5" fill="#58626c" text-anchor="middle" font-weight="normal" font-family="Liberation Sans, sans-serif" >12.00</text><text x="632.2" y="654.78" font-size="10.5" fill="#58626c" text-anchor="middle" font-weight="normal" font-family="Liberation Sans, sans-serif" >14.00</text><text x="712.9" y="654.78" font-size="10.5" fill="#58626c" text-anchor="middle" font-weight="normal" font-family="Liberation Sans, sans-serif" >16.00</text><text x="793.6" y="654.78" font-size="10.5" fill="#58626c" text-anchor="middle" font-weight="normal" font-family="Liberation Sans, sans-serif" >18.00</text><text x="854" y="654.96" font-size="11" fill="#2a8ea4" text-anchor="middle" font-weight="normal" font-family="Liberation Sans, sans-serif" >ms</text><line x1="918.5" y1="77" x2="918.5" y2="741" stroke="#8a96a8" stroke-width="1" /><line x1="921.5" y1="52" x2="921.5" y2="741" stroke="#6a7688" stroke-width="1" /><rect x="919" y="52" width="2" height="689" fill="#fff" /><rect x="882" y="87" width="2" height="2" fill="#999" /><rect x="886" y="87" width="2" height="2" fill="#999" /><rect x="890" y="87" width="2" height="2" fill="#999" /><rect x="894" y="87" width="2" height="2" fill="#999" /><rect x="898" y="87" width="2" height="2" fill="#999" /><rect x="902" y="87" width="2" height="2" fill="#999" /><g stroke="#000" fill="none" stroke-width="2.2"><path d="M879,103 V98 H884 M899,98 H904 V103 M904,117 V122 H899 M884,122 H879 V117"/><path d="M883,102 L900,118 M900,102 L883,118" stroke-width="1.2"/></g><path d="M881,100 L889,102 L883,108 Z M902,100 L900,108 L894,102 Z M881,120 L883,112 L889,118 Z M902,120 L894,118 L900,112 Z" fill="#000"/><line x1="896" y1="149" x2="905" y2="158" stroke="#444" stroke-width="4" stroke-linecap="round"/><line x1="894" y1="147" x2="897" y2="150" stroke="#f09030" stroke-width="4"/><circle cx="887.5" cy="140.5" r="9.5" fill="url(#mag)" stroke="#333" stroke-width="1.6"/><path d="M883,140.5 H892 M887.5,136 V145" stroke="#333" stroke-width="1.4"/><text x="891" y="185.04" font-size="14" fill="#000" text-anchor="middle" font-weight="bold" font-family="Liberation Sans, sans-serif" >F</text><g stroke="#8890c0" stroke-width="1.6"><line x1="882" y1="200" x2="882" y2="230"/><line x1="904" y1="200" x2="904" y2="230"/><line x1="878" y1="204" x2="908" y2="204"/><line x1="878" y1="226" x2="908" y2="226"/></g><g stroke="#10a040" stroke-width="1.3"><line x1="888.5" y1="205" x2="888.5" y2="226"/><line x1="897.5" y1="205" x2="897.5" y2="226"/><line x1="883" y1="209" x2="904" y2="209"/><line x1="883" y1="220" x2="904" y2="220"/></g><path d="M879,236 V263 M904.5,236 V263" stroke="#000" stroke-width="2"/><path d="M882,249 H902" stroke="#000" stroke-width="1.2"/><path d="M881,249 L887,245 L887,253 Z M903,249 L897,245 L897,253 Z" fill="#000"/><path d="M877,270 V299 H907" stroke="#aab" stroke-width="0.8" fill="none"/><path d="M879,299 C882,299 882,277 885,277 C888,277 889,290 891,299 Z" fill="#fbd050"/><path d="M879,299 C881,290 882,278 885,277 C887,277 889,283 889,290" fill="none" stroke="#f8a820" stroke-width="1.5"/><path d="M883,299 C886,299 886,284 890,284 C894,284 893,299 898,299 Z" fill="#f07830"/><path d="M893,299 C896,299 895,276 899,276 C903,276 902,299 907,299 Z" fill="#7040a0"/><rect x="877" y="305" width="14" height="14" fill="#000" /><rect x="892" y="305" width="14" height="14" fill="#000" /><rect x="877" y="321" width="14" height="14" fill="#000" /><rect x="892" y="321" width="14" height="14" fill="#000" /><path d="M880,312 H888 M895,312 H903 M899,308 V316 M881,324 L887,330 M887,324 L881,330 M895,326 H903 M895,329.5 H903" stroke="#fff" stroke-width="2"/><path d="M880,344 Q880,342 882,342 H905 Q907,342 907,344 V369 Q907,370 905,370 H886 L880,364 Z" fill="url(#flop)"/><rect x="885" y="343" width="17" height="13" fill="#e8f0f8"/><rect x="886" y="362" width="14" height="8" fill="#e0eaf4"/><rect x="889" y="363" width="3" height="7" fill="#4a7ca8"/><rect x="878" y="379" width="28" height="22" fill="none" stroke="#222" stroke-width="1" stroke-dasharray="1.5 1"/><rect x="876.5" y="377.5" width="3" height="3" fill="#222" /><rect x="904.5" y="377.5" width="3" height="3" fill="#222" /><rect x="876.5" y="399.5" width="3" height="3" fill="#222" /><rect x="904.5" y="399.5" width="3" height="3" fill="#222" /><rect x="882" y="383" width="20" height="11" fill="#40c0e0"/><path d="M882,394 L888,387 L893,392 L897,388 L902,394 Z" fill="#fff"/><circle cx="890" cy="386" r="1.6" fill="#fff"/><rect x="882" y="396" width="20" height="2" fill="#666"/><rect x="877.5" y="412.5" width="29" height="25" fill="#fff" stroke="#111" stroke-width="1"/><g stroke="#ccc" stroke-width="0.5"><line x1="881.6" y1="413" x2="881.6" y2="437"/><line x1="885.8" y1="413" x2="885.8" y2="437"/><line x1="889.9" y1="413" x2="889.9" y2="437"/><line x1="894.1" y1="413" x2="894.1" y2="437"/><line x1="898.2" y1="413" x2="898.2" y2="437"/><line x1="902.4" y1="413" x2="902.4" y2="437"/><line x1="878" y1="416.7" x2="906" y2="416.7"/><line x1="878" y1="420.8" x2="906" y2="420.8"/><line x1="878" y1="425.0" x2="906" y2="425.0"/><line x1="878" y1="429.2" x2="906" y2="429.2"/><line x1="878" y1="433.3" x2="906" y2="433.3"/></g><path d="M878,425 C880,417 883,417 885,425 C887,433 890,433 892,425 C894,417 897,417 899,425 C901,433 904,433 906,425" fill="none" stroke="#222" stroke-width="1.4"/><rect x="878.5" y="449.5" width="27" height="22" fill="#e8f0f8" stroke="#667" stroke-width="1.5"/><path d="M887.5,449 V472 M896.5,449 V472 M878,457 H906 M878,464.5 H906" stroke="#667" stroke-width="1.5"/><circle cx="878.5" cy="449.5" r="2" fill="#7fb8b0"/><circle cx="905.5" cy="449.5" r="2" fill="#7fb8b0"/><circle cx="878.5" cy="471.5" r="2" fill="#7fb8b0"/><circle cx="905.5" cy="471.5" r="2" fill="#7fb8b0"/><path d="M877,480 L907,511 H877 Z" fill="#8fd0c8"/><path d="M882,493 L895,506 H882 Z" fill="#fff"/><path d="M878.5,484 V510" stroke="#5a90c8" stroke-width="1" stroke-dasharray="1 1.5"/><text x="891" y="533.96" font-size="11" fill="#000" text-anchor="middle" font-weight="normal" font-family="Liberation Sans, sans-serif" >T</text><rect x="6" y="668" width="912" height="22" fill="url(#th)" /><rect x="6" y="690" width="912" height="1" fill="#d5d5d5" /><rect x="6" y="691" width="912" height="24" fill="#f1efe6" /><rect x="6" y="715" width="912" height="23" fill="#f1efe6" /><rect x="11" y="715" width="894" height="23" fill="#ffff00" /><rect x="905" y="715" width="13" height="23" fill="#f1efe6" /><line x1="35.4" y1="668" x2="35.4" y2="690" stroke="#dcdcdc" stroke-width="1" /><line x1="114.4" y1="668" x2="114.4" y2="690" stroke="#dcdcdc" stroke-width="1" /><line x1="193.4" y1="668" x2="193.4" y2="690" stroke="#dcdcdc" stroke-width="1" /><line x1="272.4" y1="668" x2="272.4" y2="690" stroke="#dcdcdc" stroke-width="1" /><line x1="351.4" y1="668" x2="351.4" y2="690" stroke="#dcdcdc" stroke-width="1" /><line x1="430.4" y1="668" x2="430.4" y2="690" stroke="#dcdcdc" stroke-width="1" /><line x1="509.4" y1="668" x2="509.4" y2="690" stroke="#dcdcdc" stroke-width="1" /><line x1="588.4" y1="668" x2="588.4" y2="690" stroke="#dcdcdc" stroke-width="1" /><line x1="667.4" y1="668" x2="667.4" y2="690" stroke="#dcdcdc" stroke-width="1" /><line x1="746.4" y1="668" x2="746.4" y2="690" stroke="#dcdcdc" stroke-width="1" /><line x1="825.4" y1="668" x2="825.4" y2="690" stroke="#dcdcdc" stroke-width="1" /><line x1="904.4" y1="668" x2="904.4" y2="690" stroke="#dcdcdc" stroke-width="1" /><text x="12" y="683.96" font-size="11" fill="#000" text-anchor="start" font-weight="normal" font-family="Liberation Sans, sans-serif" >ch</text><text x="13" y="706.96" font-size="11" fill="#000" text-anchor="start" font-weight="normal" font-family="Liberation Sans, sans-serif" >A</text><text x="13" y="729.96" font-size="11" fill="#000" text-anchor="start" font-weight="normal" font-family="Liberation Sans, sans-serif" >B</text><text x="41.4" y="684.32" font-size="12" fill="#000" text-anchor="start" font-weight="normal" font-family="Liberation Sans, sans-serif" >最大值</text><text x="41.4" y="706.96" font-size="11" fill="#000" text-anchor="start" font-weight="normal" font-family="Liberation Sans, sans-serif" >0.917V</text><text x="41.4" y="729.96" font-size="11" fill="#000" text-anchor="start" font-weight="normal" font-family="Liberation Sans, sans-serif" >1.938V</text><text x="120.4" y="684.32" font-size="12" fill="#000" text-anchor="start" font-weight="normal" font-family="Liberation Sans, sans-serif" >最小值</text><text x="120.4" y="706.96" font-size="11" fill="#000" text-anchor="start" font-weight="normal" font-family="Liberation Sans, sans-serif" >-0.874V</text><text x="120.4" y="729.96" font-size="11" fill="#000" text-anchor="start" font-weight="normal" font-family="Liberation Sans, sans-serif" >-2.239V</text><text x="199.4" y="684.32" font-size="12" fill="#000" text-anchor="start" font-weight="normal" font-family="Liberation Sans, sans-serif" >峰峰值</text><text x="199.4" y="706.96" font-size="11" fill="#000" text-anchor="start" font-weight="normal" font-family="Liberation Sans, sans-serif" >1.791V</text><text x="199.4" y="729.96" font-size="11" fill="#000" text-anchor="start" font-weight="normal" font-family="Liberation Sans, sans-serif" >4.177V</text><text x="278.4" y="684.32" font-size="12" fill="#000" text-anchor="start" font-weight="normal" font-family="Liberation Sans, sans-serif" >频率</text><text x="278.4" y="706.96" font-size="11" fill="#000" text-anchor="start" font-weight="normal" font-family="Liberation Sans, sans-serif" >0.000Hz</text><text x="278.4" y="729.96" font-size="11" fill="#000" text-anchor="start" font-weight="normal" font-family="Liberation Sans, sans-serif" >0.000Hz</text><text x="357.4" y="684.32" font-size="12" fill="#000" text-anchor="start" font-weight="normal" font-family="Liberation Sans, sans-serif" >平均值</text><text x="357.4" y="706.96" font-size="11" fill="#000" text-anchor="start" font-weight="normal" font-family="Liberation Sans, sans-serif" >-0.066V</text><text x="357.4" y="729.96" font-size="11" fill="#000" text-anchor="start" font-weight="normal" font-family="Liberation Sans, sans-serif" >-0.258V</text><text x="436.4" y="684.32" font-size="12" fill="#000" text-anchor="start" font-weight="normal" font-family="Liberation Sans, sans-serif" >周期</text><text x="436.4" y="706.96" font-size="11" fill="#000" text-anchor="start" font-weight="normal" font-family="Liberation Sans, sans-serif" >0.000us</text><text x="436.4" y="729.96" font-size="11" fill="#000" text-anchor="start" font-weight="normal" font-family="Liberation Sans, sans-serif" >0.000us</text><text x="515.4" y="684.32" font-size="12" fill="#000" text-anchor="start" font-weight="normal" font-family="Liberation Sans, sans-serif" >正脉宽</text><text x="515.4" y="706.96" font-size="11" fill="#000" text-anchor="start" font-weight="normal" font-family="Liberation Sans, sans-serif" >0.000us</text><text x="515.4" y="729.96" font-size="11" fill="#000" text-anchor="start" font-weight="normal" font-family="Liberation Sans, sans-serif" >0.000us</text><text x="594.4" y="684.32" font-size="12" fill="#000" text-anchor="start" font-weight="normal" font-family="Liberation Sans, sans-serif" >负脉宽</text><text x="594.4" y="706.96" font-size="11" fill="#000" text-anchor="start" font-weight="normal" font-family="Liberation Sans, sans-serif" >0.000us</text><text x="594.4" y="729.96" font-size="11" fill="#000" text-anchor="start" font-weight="normal" font-family="Liberation Sans, sans-serif" >0.000us</text><text x="673.4" y="684.32" font-size="12" fill="#000" text-anchor="start" font-weight="normal" font-family="Liberation Sans, sans-serif" >占空比</text><text x="673.4" y="706.96" font-size="11" fill="#000" text-anchor="start" font-weight="normal" font-family="Liberation Sans, sans-serif" >0.000%</text><text x="673.4" y="729.96" font-size="11" fill="#000" text-anchor="start" font-weight="normal" font-family="Liberation Sans, sans-serif" >0.000%</text><text x="752.4" y="684.32" font-size="12" fill="#000" text-anchor="start" font-weight="normal" font-family="Liberation Sans, sans-serif" >上升时间</text><text x="752.4" y="706.96" font-size="11" fill="#000" text-anchor="start" font-weight="normal" font-family="Liberation Sans, sans-serif" >0.000us</text><text x="752.4" y="729.96" font-size="11" fill="#000" text-anchor="start" font-weight="normal" font-family="Liberation Sans, sans-serif" >0.000us</text><text x="831.4" y="684.32" font-size="12" fill="#000" text-anchor="start" font-weight="normal" font-family="Liberation Sans, sans-serif" >有效值</text><text x="831.4" y="706.96" font-size="11" fill="#000" text-anchor="start" font-weight="normal" font-family="Liberation Sans, sans-serif" >0.633V</text><text x="831.4" y="729.96" font-size="11" fill="#000" text-anchor="start" font-weight="normal" font-family="Liberation Sans, sans-serif" >1.517V</text><rect x="2" y="740" width="916" height="1" fill="#a0a0a0" /><rect x="2" y="741" width="1361" height="24" fill="#f0f0f0" /><rect x="67.5" y="742.5" width="31" height="23" fill="#f0f0f0" stroke="#9a9a9a" stroke-width="1"/><text x="83" y="757.10" font-size="10" fill="#000" text-anchor="middle" font-weight="normal" font-family="Liberation Sans, sans-serif" >DC</text><line x1="143.5" y1="744" x2="143.5" y2="763" stroke="#a0a0a0" stroke-width="1" /><rect x="221.5" y="742.5" width="31" height="23" fill="#f0f0f0" stroke="#9a9a9a" stroke-width="1"/><text x="237" y="757.10" font-size="10" fill="#000" text-anchor="middle" font-weight="normal" font-family="Liberation Sans, sans-serif" >DC</text><rect x="922" y="52" width="441" height="689" fill="#f0f0f0" /><rect x="925.5" y="57.5" width="387" height="196" fill="#f0f0f0" stroke="#ffffff" stroke-width="1"/><rect x="925" y="253" width="388" height="2" fill="#7a7a7a" /><rect x="925" y="255" width="388" height="1" fill="#fff" /><rect x="925" y="449" width="388" height="2" fill="#7a7a7a" /><rect x="925" y="451" width="388" height="1" fill="#fff" /><rect x="925" y="646" width="388" height="1.5" fill="#7a7a7a" /><line x1="925.5" y1="57" x2="925.5" y2="646" stroke="#fff" stroke-width="1" /><line x1="1312.5" y1="57" x2="1312.5" y2="646" stroke="#8a8a8a" stroke-width="1" /><rect x="922" y="52" width="441" height="5" fill="#f0f0f0" /><rect x="966.5" y="52.5" width="376" height="3" fill="#d4d4d4" stroke="#8a8a8a" stroke-width="1"/><line x1="1006.5" y1="52" x2="1006.5" y2="56" stroke="#f8f8f8" stroke-width="1.5" /><line x1="1048.5" y1="52" x2="1048.5" y2="56" stroke="#f8f8f8" stroke-width="1.5" /><line x1="1091" y1="52" x2="1091" y2="56" stroke="#f8f8f8" stroke-width="1.5" /><line x1="1136" y1="52" x2="1136" y2="56" stroke="#f8f8f8" stroke-width="1.5" /><line x1="1342.5" y1="57" x2="1342.5" y2="646" stroke="#777" stroke-width="1.2" /><line x1="1340.5" y1="57" x2="1340.5" y2="646" stroke="#ccc" stroke-width="1" /><path d="M1313.5,57.5 H1339 Q1341,57.5 1341,59.5 V119.5 Q1341,121.5 1339,121.5 H1313.5" fill="#f0f0f0" stroke="#8a8a8a" stroke-width="1"/><line x1="1341.5" y1="59.5" x2="1341.5" y2="121.5" stroke="#555" stroke-width="1"/><text x="1327" y="93.46" font-size="11" fill="#000" text-anchor="middle" font-weight="normal" font-family="Liberation Sans, sans-serif" >osc</text><path d="M1313.5,122.5 H1337 Q1339,122.5 1339,124.5 V181 Q1339,183 1337,183 H1313.5" fill="#f0f0f0" stroke="#8a8a8a" stroke-width="1"/><line x1="1339.5" y1="124.5" x2="1339.5" y2="183" stroke="#555" stroke-width="1"/><text x="1327" y="140.43" font-size="13" fill="#000" text-anchor="middle" font-weight="normal" font-family="Liberation Sans, sans-serif" >采</text><text x="1327" y="157.43" font-size="13" fill="#000" text-anchor="middle" font-weight="normal" font-family="Liberation Sans, sans-serif" >集</text><text x="1327" y="174.43" font-size="13" fill="#000" text-anchor="middle" font-weight="normal" font-family="Liberation Sans, sans-serif" >卡</text><path d="M1313.5,185 H1337 Q1339,185 1339,187 V245 Q1339,247 1337,247 H1313.5" fill="#f0f0f0" stroke="#8a8a8a" stroke-width="1"/><line x1="1339.5" y1="187" x2="1339.5" y2="247" stroke="#555" stroke-width="1"/><text x="1327" y="212.18" font-size="13" fill="#000" text-anchor="middle" font-weight="normal" font-family="Liberation Sans, sans-serif" >录</text><text x="1327" y="229.18" font-size="13" fill="#000" text-anchor="middle" font-weight="normal" font-family="Liberation Sans, sans-serif" >像</text><path d="M1313.5,256 H1339 Q1341,256 1341,258 V302.5 Q1341,304.5 1339,304.5 H1313.5" fill="#f0f0f0" stroke="#8a8a8a" stroke-width="1"/><line x1="1341.5" y1="258" x2="1341.5" y2="304.5" stroke="#555" stroke-width="1"/><text x="1327" y="277.71" font-size="11" fill="#000" text-anchor="middle" font-weight="normal" font-family="Liberation Sans, sans-serif" >·</text><text x="1327" y="290.71" font-size="11" fill="#000" text-anchor="middle" font-weight="normal" font-family="Liberation Sans, sans-serif" >A</text><path d="M1313.5,306 H1337 Q1339,306 1339,308 V348 Q1339,350 1337,350 H1313.5" fill="#f0f0f0" stroke="#8a8a8a" stroke-width="1"/><line x1="1339.5" y1="308" x2="1339.5" y2="350" stroke="#555" stroke-width="1"/><text x="1327" y="324.18" font-size="13" fill="#000" text-anchor="middle" font-weight="normal" font-family="Liberation Sans, sans-serif" >触</text><text x="1327" y="341.18" font-size="13" fill="#000" text-anchor="middle" font-weight="normal" font-family="Liberation Sans, sans-serif" >发</text><path d="M1313.5,352 H1337 Q1339,352 1339,354 V395 Q1339,397 1337,397 H1313.5" fill="#f0f0f0" stroke="#8a8a8a" stroke-width="1"/><line x1="1339.5" y1="354" x2="1339.5" y2="397" stroke="#555" stroke-width="1"/><text x="1327" y="370.68" font-size="13" fill="#000" text-anchor="middle" font-weight="normal" font-family="Liberation Sans, sans-serif" >差</text><text x="1327" y="387.68" font-size="13" fill="#000" text-anchor="middle" font-weight="normal" font-family="Liberation Sans, sans-serif" >分</text><path d="M1313.5,399 H1337 Q1339,399 1339,401 V442 Q1339,444 1337,444 H1313.5" fill="#f0f0f0" stroke="#8a8a8a" stroke-width="1"/><line x1="1339.5" y1="401" x2="1339.5" y2="444" stroke="#555" stroke-width="1"/><text x="1327" y="417.68" font-size="13" fill="#000" text-anchor="middle" font-weight="normal" font-family="Liberation Sans, sans-serif" >探</text><text x="1327" y="434.68" font-size="13" fill="#000" text-anchor="middle" font-weight="normal" font-family="Liberation Sans, sans-serif" >头</text><path d="M1313.5,453 H1339 Q1341,453 1341,455 V498 Q1341,500 1339,500 H1313.5" fill="#f0f0f0" stroke="#8a8a8a" stroke-width="1"/><line x1="1341.5" y1="455" x2="1341.5" y2="500" stroke="#555" stroke-width="1"/><text x="1327" y="473.96" font-size="11" fill="#000" text-anchor="middle" font-weight="normal" font-family="Liberation Sans, sans-serif" >·</text><text x="1327" y="486.96" font-size="11" fill="#000" text-anchor="middle" font-weight="normal" font-family="Liberation Sans, sans-serif" >B</text><path d="M1313.5,502 H1337 Q1339,502 1339,504 V544 Q1339,546 1337,546 H1313.5" fill="#f0f0f0" stroke="#8a8a8a" stroke-width="1"/><line x1="1339.5" y1="504" x2="1339.5" y2="546" stroke="#555" stroke-width="1"/><text x="1327" y="520.18" font-size="13" fill="#000" text-anchor="middle" font-weight="normal" font-family="Liberation Sans, sans-serif" >逻</text><text x="1327" y="537.18" font-size="13" fill="#000" text-anchor="middle" font-weight="normal" font-family="Liberation Sans, sans-serif" >辑</text><path d="M1313.5,548 H1337 Q1339,548 1339,550 V590 Q1339,592 1337,592 H1313.5" fill="#f0f0f0" stroke="#8a8a8a" stroke-width="1"/><line x1="1339.5" y1="550" x2="1339.5" y2="592" stroke="#555" stroke-width="1"/><text x="1327" y="566.18" font-size="13" fill="#000" text-anchor="middle" font-weight="normal" font-family="Liberation Sans, sans-serif" >差</text><text x="1327" y="583.18" font-size="13" fill="#000" text-anchor="middle" font-weight="normal" font-family="Liberation Sans, sans-serif" >分</text><path d="M1313.5,596 H1337 Q1339,596 1339,598 V638 Q1339,640 1337,640 H1313.5" fill="#f0f0f0" stroke="#8a8a8a" stroke-width="1"/><line x1="1339.5" y1="598" x2="1339.5" y2="640" stroke="#555" stroke-width="1"/><text x="1327" y="614.18" font-size="13" fill="#000" text-anchor="middle" font-weight="normal" font-family="Liberation Sans, sans-serif" >探</text><text x="1327" y="631.18" font-size="13" fill="#000" text-anchor="middle" font-weight="normal" font-family="Liberation Sans, sans-serif" >头</text><rect x="1346" y="52" width="17" height="689" fill="#f0f0f0" /><line x1="1346.5" y1="57" x2="1346.5" y2="680" stroke="#e4e4e4" stroke-width="1" /><path d="M1350,66 L1355,61 L1360,66 Z" fill="#333"/><rect x="1347.5" y="85.5" width="14" height="432" rx="2" fill="url(#thumb)" stroke="#a8a8a8" stroke-width="1"/><path d="M1351,298 H1358 M1351,300.5 H1358 M1351,303 H1358" stroke="#777" stroke-width="1"/><path d="M1350,668 L1355,673 L1360,668 Z" fill="#333"/><circle cx="1026.5" cy="155.5" r="80" fill="#e4e4dc" stroke="#d8d8c8" stroke-width="0.8"/><circle cx="1026.5" cy="155.5" r="78" fill="url(#tring2)"/><path d="M1075.68,101.83 A72.8,72.8 0 0 1 1099.26,158.04" fill="none" stroke="#262826" stroke-width="11"/><path d="M1080.01,107.32 A72,72 0 0 1 1098.46,152.99" fill="none" stroke="#9a9a9a" stroke-width="0.9"/><circle cx="1023.5" cy="159.5" r="64" fill="#555" filter="url(#blur2)" opacity="0.8"/><circle cx="1026.5" cy="155.5" r="62" fill="url(#tface)"/><g transform="translate(1027.5,151.5) rotate(213)"><text x="0" y="6" font-size="18" font-weight="bold" fill="#a04858" text-anchor="middle" font-family="Liberation Sans, sans-serif" stroke="#e8fafa" stroke-width="1.6" paint-order="stroke">Time</text></g><g transform="translate(1072,181) rotate(33.5)"><rect x="-12" y="-3.5" width="24" height="7" fill="#c40808" stroke="#e0f8f8" stroke-width="1"/></g><circle cx="949.7" cy="153.4" r="4.2" fill="#1a1a1a"/><circle cx="948.5" cy="152.1" r="1.2" fill="#888"/><circle cx="960.9" cy="193" r="4.2" fill="#1a1a1a"/><circle cx="959.6999999999999" cy="191.7" r="1.2" fill="#888"/><circle cx="997.9" cy="224.2" r="4.2" fill="#1a1a1a"/><circle cx="996.6999999999999" cy="222.89999999999998" r="1.2" fill="#888"/><circle cx="1049.9" cy="226" r="4.2" fill="#1a1a1a"/><circle cx="1048.7" cy="224.7" r="1.2" fill="#888"/><circle cx="1091" cy="195" r="4.2" fill="#1a1a1a"/><circle cx="1089.8" cy="193.7" r="1.2" fill="#888"/><g transform="translate(956.2,96.6) rotate(-50.0)"><text x="0" y="4.5" font-size="12.5" fill="#555" text-anchor="middle" font-family="Liberation Sans, sans-serif">1us</text></g><line x1="966.3" y1="105.1" x2="962.9" y2="102.2" stroke="#333" stroke-width="1.2"/><g transform="translate(995.3,73.2) rotate(-20.8)"><text x="0" y="4.5" font-size="12.5" fill="#555" text-anchor="middle" font-family="Liberation Sans, sans-serif">0.5us</text></g><line x1="998.7" y1="82.1" x2="997.1" y2="77.9" stroke="#333" stroke-width="1.2"/><g transform="translate(1053.8,70.6) rotate(17.8)"><text x="0" y="4.5" font-size="12.5" fill="#555" text-anchor="middle" font-family="Liberation Sans, sans-serif">0.2us</text></g><line x1="1050.5" y1="80.8" x2="1051.9" y2="76.5" stroke="#333" stroke-width="1.2"/><g transform="translate(1093,97.5) rotate(48.9)"><text x="0" y="4.5" font-size="12.5" fill="#555" text-anchor="middle" font-family="Liberation Sans, sans-serif">0.1us</text></g><line x1="1085.7" y1="103.9" x2="1089.1" y2="100.9" stroke="#333" stroke-width="1.2"/><g transform="translate(935.4,147.4) rotate(-84.9)"><text x="0" y="4.5" font-size="12.5" fill="#555" text-anchor="middle" font-family="Liberation Sans, sans-serif">10us</text></g><line x1="948.3" y1="148.5" x2="943.8" y2="148.1" stroke="#333" stroke-width="1.2"/><g transform="translate(945.8,198.2) rotate(242.1)"><text x="0" y="4.5" font-size="12.5" fill="#555" text-anchor="middle" font-family="Liberation Sans, sans-serif">100us</text></g><line x1="957.1" y1="192.2" x2="953.1" y2="194.3" stroke="#333" stroke-width="1.2"/><g transform="translate(992.7,237.2) rotate(202.5)"><text x="0" y="4.5" font-size="12.5" fill="#555" text-anchor="middle" font-family="Liberation Sans, sans-serif">0.2ms</text></g><line x1="996.5" y1="228.0" x2="994.8" y2="232.2" stroke="#333" stroke-width="1.2"/><g transform="translate(1055.1,239.8) rotate(161.3)"><text x="0" y="4.5" font-size="12.5" fill="#555" text-anchor="middle" font-family="Liberation Sans, sans-serif">0.5ms</text></g><line x1="1051.7" y1="229.8" x2="1053.2" y2="234.1" stroke="#333" stroke-width="1.2"/><rect x="1138.5" y="68.5" width="75" height="24" rx="3" fill="url(#btn)" stroke="#707070" stroke-width="1"/><text x="1176" y="85.18" font-size="13" fill="#000" text-anchor="middle" font-weight="normal" font-family="Liberation Sans, sans-serif" >自动</text><rect x="1115.5" y="141.5" width="98" height="22" rx="3" fill="url(#btn)" stroke="#707070" stroke-width="1"/><text x="1122" y="157.18" font-size="13" fill="#000" text-anchor="start" font-weight="normal" font-family="Liberation Sans, sans-serif" >50ns</text><path d="M1201,150.5 h8 l-4,4 z" fill="#000"/><rect x="1103.5" y="194.5" width="110" height="22" rx="3" fill="url(#btn)" stroke="#707070" stroke-width="1"/><text x="1112" y="210.18" font-size="13" fill="#000" text-anchor="start" font-weight="normal" font-family="Liberation Sans, sans-serif" >2ms</text><path d="M1201,203.5 h8 l-4,4 z" fill="#000"/><rect x="1103.5" y="229.5" width="12" height="12" fill="#f4f4f4" stroke="#8a8a8a" stroke-width="1"/><rect x="1105.5" y="231.5" width="8" height="8" fill="#e8e8e8" stroke="#c8c8c8" stroke-width="0.5"/><path d="M1106,235 L1108.5,239 L1113,231" fill="none" stroke="#2a3a9a" stroke-width="1.8"/><text x="1122" y="240.39" font-size="12.2" fill="#000" text-anchor="start" font-weight="normal" font-family="Liberation Sans, sans-serif" >垂直分隔线</text><rect x="1271.5" y="60.5" width="36" height="135" fill="#f0f0f0" stroke="#7a7a7a" stroke-width="1"/><rect x="1280" y="69" width="3" height="117" fill="#e8e8e8" stroke="#c0c0c0" stroke-width="0.8"/><rect x="1295.5" y="74" width="3" height="108" fill="#c8c8c8"/><path d="M1274.5,111 H1288 L1292,116 L1288,121.5 H1274.5 Z" fill="url(#btn)" stroke="#8a8a8a" stroke-width="1"/><rect x="1228" y="195.5" width="80" height="18" fill="#f0f0f0" stroke="#e0e0e0" stroke-width="0"/><line x1="1228.5" y1="196" x2="1228.5" y2="213" stroke="#9a9a9a" stroke-width="1" /><line x1="1228" y1="196" x2="1308" y2="196" stroke="#9a9a9a" stroke-width="1" /><text x="1268" y="209.68" font-size="13" fill="#000" text-anchor="middle" font-weight="normal" font-family="Liberation Sans, sans-serif" >2ms</text><rect x="1271.5" y="215.5" width="35" height="34" fill="#1a4a80" stroke="#777" stroke-width="1"/><circle cx="1289" cy="232.5" r="16" fill="#98c420" stroke="#c8e040" stroke-width="1.2"/><path d="M1277.7,243.8 A16,16 0 0 1 1276,223.5 L1283,228.5 L1295,240.5 L1292,248.2 A16,16 0 0 1 1277.7,243.8 Z" fill="#6a9a10" opacity="0.55"/><circle cx="1290" cy="233.5" r="5" fill="#6a9a10"/><path d="M1284,227.5 A8,8 0 1 1 1282.5,238.0" fill="none" stroke="#fff" stroke-width="4"/><path d="M1277,226.5 L1286,223.5 L1285,233.5 Z" fill="#fff"/><path d="M930.14,351.68 A100,100 0 0 1 1128.86,351.68" fill="none" stroke="#30b4ec" stroke-width="3.6"/><circle cx="1029.5" cy="363" r="82.5" fill="#f4f4f4"/><circle cx="1029.5" cy="363" r="81.5" fill="url(#cring)" stroke="#e4e4e4" stroke-width="1"/><circle cx="1029.5" cy="363" r="81" fill="url(#cringtop)"/><circle cx="1029.5" cy="363" r="70" fill="url(#cridge)"/><g transform="translate(1029.5,363)"><path d="M53.0,0.0 L70.0,0.0 M52.9,2.8 L69.9,3.7 M52.7,5.5 L69.6,7.3 M52.3,8.3 L69.1,11.0 M51.8,11.0 L68.5,14.6 M51.2,13.7 L67.6,18.1 M50.4,16.4 L66.6,21.6 M49.5,19.0 L65.4,25.1 M48.4,21.6 L63.9,28.5 M47.2,24.1 L62.4,31.8 M45.9,26.5 L60.6,35.0 M44.4,28.9 L58.7,38.1 M42.9,31.2 L56.6,41.1 M41.2,33.4 L54.4,44.1 M39.4,35.5 L52.0,46.8 M37.5,37.5 L49.5,49.5 M35.5,39.4 L46.8,52.0 M33.4,41.2 L44.1,54.4 M31.2,42.9 L41.1,56.6 M28.9,44.4 L38.1,58.7 M26.5,45.9 L35.0,60.6 M24.1,47.2 L31.8,62.4 M21.6,48.4 L28.5,63.9 M19.0,49.5 L25.1,65.4 M16.4,50.4 L21.6,66.6 M13.7,51.2 L18.1,67.6 M11.0,51.8 L14.6,68.5 M8.3,52.3 L11.0,69.1 M5.5,52.7 L7.3,69.6 M2.8,52.9 L3.7,69.9 M0.0,53.0 L0.0,70.0 M-2.8,52.9 L-3.7,69.9 M-5.5,52.7 L-7.3,69.6 M-8.3,52.3 L-11.0,69.1 M-11.0,51.8 L-14.6,68.5 M-13.7,51.2 L-18.1,67.6 M-16.4,50.4 L-21.6,66.6 M-19.0,49.5 L-25.1,65.4 M-21.6,48.4 L-28.5,63.9 M-24.1,47.2 L-31.8,62.4 M-26.5,45.9 L-35.0,60.6 M-28.9,44.4 L-38.1,58.7 M-31.2,42.9 L-41.1,56.6 M-33.4,41.2 L-44.1,54.4 M-35.5,39.4 L-46.8,52.0 M-37.5,37.5 L-49.5,49.5 M-39.4,35.5 L-52.0,46.8 M-41.2,33.4 L-54.4,44.1 M-42.9,31.2 L-56.6,41.1 M-44.4,28.9 L-58.7,38.1 M-45.9,26.5 L-60.6,35.0 M-47.2,24.1 L-62.4,31.8 M-48.4,21.6 L-63.9,28.5 M-49.5,19.0 L-65.4,25.1 M-50.4,16.4 L-66.6,21.6 M-51.2,13.7 L-67.6,18.1 M-51.8,11.0 L-68.5,14.6 M-52.3,8.3 L-69.1,11.0 M-52.7,5.5 L-69.6,7.3 M-52.9,2.8 L-69.9,3.7 M-53.0,0.0 L-70.0,0.0 M-52.9,-2.8 L-69.9,-3.7 M-52.7,-5.5 L-69.6,-7.3 M-52.3,-8.3 L-69.1,-11.0 M-51.8,-11.0 L-68.5,-14.6 M-51.2,-13.7 L-67.6,-18.1 M-50.4,-16.4 L-66.6,-21.6 M-49.5,-19.0 L-65.4,-25.1 M-48.4,-21.6 L-63.9,-28.5 M-47.2,-24.1 L-62.4,-31.8 M-45.9,-26.5 L-60.6,-35.0 M-44.4,-28.9 L-58.7,-38.1 M-42.9,-31.2 L-56.6,-41.1 M-41.2,-33.4 L-54.4,-44.1 M-39.4,-35.5 L-52.0,-46.8 M-37.5,-37.5 L-49.5,-49.5 M-35.5,-39.4 L-46.8,-52.0 M-33.4,-41.2 L-44.1,-54.4 M-31.2,-42.9 L-41.1,-56.6 M-28.9,-44.4 L-38.1,-58.7 M-26.5,-45.9 L-35.0,-60.6 M-24.1,-47.2 L-31.8,-62.4 M-21.6,-48.4 L-28.5,-63.9 M-19.0,-49.5 L-25.1,-65.4 M-16.4,-50.4 L-21.6,-66.6 M-13.7,-51.2 L-18.1,-67.6 M-11.0,-51.8 L-14.6,-68.5 M-8.3,-52.3 L-11.0,-69.1 M-5.5,-52.7 L-7.3,-69.6 M-2.8,-52.9 L-3.7,-69.9 M-0.0,-53.0 L-0.0,-70.0 M2.8,-52.9 L3.7,-69.9 M5.5,-52.7 L7.3,-69.6 M8.3,-52.3 L11.0,-69.1 M11.0,-51.8 L14.6,-68.5 M13.7,-51.2 L18.1,-67.6 M16.4,-50.4 L21.6,-66.6 M19.0,-49.5 L25.1,-65.4 M21.6,-48.4 L28.5,-63.9 M24.1,-47.2 L31.8,-62.4 M26.5,-45.9 L35.0,-60.6 M28.9,-44.4 L38.1,-58.7 M31.2,-42.9 L41.1,-56.6 M33.4,-41.2 L44.1,-54.4 M35.5,-39.4 L46.8,-52.0 M37.5,-37.5 L49.5,-49.5 M39.4,-35.5 L52.0,-46.8 M41.2,-33.4 L54.4,-44.1 M42.9,-31.2 L56.6,-41.1 M44.4,-28.9 L58.7,-38.1 M45.9,-26.5 L60.6,-35.0 M47.2,-24.1 L62.4,-31.8 M48.4,-21.6 L63.9,-28.5 M49.5,-19.0 L65.4,-25.1 M50.4,-16.4 L66.6,-21.6 M51.2,-13.7 L67.6,-18.1 M51.8,-11.0 L68.5,-14.6 M52.3,-8.3 L69.1,-11.0 M52.7,-5.5 L69.6,-7.3 M52.9,-2.8 L69.9,-3.7" stroke="#ffffff" stroke-width="0.9" opacity="0.28"/></g><circle cx="1029.5" cy="366" r="55" fill="#202020" opacity="0.75" filter="url(#blur2)"/><circle cx="1029.5" cy="366" r="52.5" fill="none" stroke="#111" stroke-width="3" opacity="0.55" filter="url(#blur1)"/><circle cx="1029.5" cy="363" r="52" fill="url(#cwhite)"/><circle cx="1039" cy="331" r="10" fill="url(#cdot)"/><g transform="translate(939,359) rotate(-87.5)"><text x="0" y="4.5" font-size="13" fill="#666" text-anchor="middle" font-family="Liberation Sans, sans-serif">50mv</text></g><line x1="948.6" y1="359.4" x2="944.6" y2="359.2" stroke="#30b4ec" stroke-width="1.5"/><g transform="translate(958,308.3) rotate(-52.6)"><text x="0" y="4.5" font-size="13" fill="#666" text-anchor="middle" font-family="Liberation Sans, sans-serif">100mv</text></g><line x1="965.2" y1="313.8" x2="962.0" y2="311.4" stroke="#30b4ec" stroke-width="1.5"/><g transform="translate(997.3,279.1) rotate(-21.0)"><text x="0" y="4.5" font-size="13" fill="#666" text-anchor="middle" font-family="Liberation Sans, sans-serif">0.2V</text></g><line x1="1000.5" y1="287.4" x2="999.0" y2="283.6" stroke="#30b4ec" stroke-width="1.5"/><g transform="translate(1057,276.6) rotate(17.7)"><text x="0" y="4.5" font-size="13" fill="#666" text-anchor="middle" font-family="Liberation Sans, sans-serif">0.5v</text></g><line x1="1054.1" y1="285.8" x2="1055.3" y2="282.0" stroke="#30b4ec" stroke-width="1.5"/><g transform="translate(1100,308.3) rotate(52.2)"><text x="0" y="4.5" font-size="13" fill="#666" text-anchor="middle" font-family="Liberation Sans, sans-serif">1v</text></g><line x1="1093.5" y1="313.3" x2="1096.7" y2="310.9" stroke="#30b4ec" stroke-width="1.5"/><g transform="translate(1119,356.5) rotate(85.8)"><text x="0" y="4.5" font-size="13" fill="#666" text-anchor="middle" font-family="Liberation Sans, sans-serif">2v</text></g><line x1="1110.3" y1="357.1" x2="1114.3" y2="356.8" stroke="#30b4ec" stroke-width="1.5"/><g transform="translate(956.7,415) rotate(234.5)"><text x="0" y="4.5" font-size="13" fill="#666" text-anchor="middle" font-family="Liberation Sans, sans-serif">20mv</text></g><g transform="translate(1111.5,280) rotate(43.4)"><rect x="-18" y="-9" width="36" height="18" rx="1.5" fill="#30b4ec"/><path d="M-6,9 L-2,14 L2,9 Z" fill="#30b4ec"/><text x="0" y="4.5" font-size="12.5" font-weight="bold" fill="#fff" text-anchor="middle" font-family="Liberation Sans, sans-serif">ch: A</text></g><line x1="1136.5" y1="259" x2="1136.5" y2="445" stroke="#909090" stroke-width="1" /><line x1="1137.5" y1="259" x2="1137.5" y2="445" stroke="#fff" stroke-width="1" /><rect x="1150" y="266" width="76" height="29" rx="14.5" fill="#d8d8e0" opacity="0.6" filter="url(#blur1)"/><rect x="1163.5" y="268.5" width="62" height="24" rx="12" fill="url(#pillc)" stroke="#3a98ae" stroke-width="1"/><circle cx="1166" cy="283" r="15" fill="#8a8a9a" opacity="0.5" filter="url(#blur1)"/><circle cx="1165.5" cy="281" r="14.5" fill="url(#pknob)" stroke="#9a98a8" stroke-width="0.8"/><text x="1200" y="285.90" font-size="15" fill="#5a5050" text-anchor="middle" font-weight="bold" font-family="Liberation Sans, sans-serif" >chA</text><rect x="1234.5" y="261.5" width="73" height="22" rx="3" fill="url(#btn)" stroke="#707070" stroke-width="1"/><path d="M1240,270 h8 l-4,4 z" fill="#000"/><text x="1305" y="277.18" font-size="13" fill="#000" text-anchor="end" font-weight="bold" font-family="Liberation Sans, sans-serif" >1X</text><rect x="1234.5" y="290.5" width="12" height="12" fill="#f4f4f4" stroke="#8a8a8a" stroke-width="1"/><rect x="1236.5" y="292.5" width="8" height="8" fill="#e8e8e8" stroke="#c8c8c8" stroke-width="0.5"/><text x="1253" y="300.50" font-size="12.5" fill="#000" text-anchor="start" font-weight="normal" font-family="Liberation Sans, sans-serif" >INVERT</text><text x="1147" y="327.68" font-size="13" fill="#a0a0a0" text-anchor="start" font-weight="normal" font-family="Liberation Sans, sans-serif" >DC</text><rect x="1168" y="311" width="60" height="24" rx="12" fill="#e8e8e8" stroke="#f8f8f8" stroke-width="1"/><rect x="1172" y="314" width="52" height="17" rx="8.5" fill="#d4d4d4"/><rect x="1175" y="315" width="30" height="16.5" rx="8.25" fill="url(#tan)"/><circle cx="1197" cy="323.5" r="4.2" fill="#d8b070" stroke="#f0d8b0" stroke-width="0.8"/><text x="1233" y="327.68" font-size="13" fill="#a0a0a0" text-anchor="start" font-weight="normal" font-family="Liberation Sans, sans-serif" >AC</text><rect x="1146.5" y="363.5" width="12" height="12" fill="#f4f4f4" stroke="#8a8a8a" stroke-width="1"/><rect x="1148.5" y="365.5" width="8" height="8" fill="#e8e8e8" stroke="#c8c8c8" stroke-width="0.5"/><path d="M1164,357 C1170,353 1176,361 1182,357 C1188,353 1194,361 1200,357 V383 C1194,387 1188,379 1182,383 C1176,387 1170,379 1164,383 Z" fill="#40a8d0"/><path d="M1164,365 C1170,361 1176,369 1182,365 C1188,361 1194,369 1200,365 V374 C1194,378 1188,370 1182,374 C1176,378 1170,370 1164,374 Z" fill="#2890b0"/><rect x="1234.5" y="363.5" width="12" height="12" fill="#f4f4f4" stroke="#8a8a8a" stroke-width="1"/><rect x="1236.5" y="365.5" width="8" height="8" fill="#e8e8e8" stroke="#c8c8c8" stroke-width="0.5"/><path d="M1237,369 L1239.5,373 L1244,365" fill="none" stroke="#2a3a9a" stroke-width="1.8"/><text x="1253" y="374.39" font-size="12.2" fill="#000" text-anchor="start" font-weight="normal" font-family="Liberation Sans, sans-serif" >水平基线</text><rect x="1228" y="385" width="80" height="18" fill="#f0f0f0"/><line x1="1228.5" y1="385" x2="1228.5" y2="402" stroke="#a0a0a0" stroke-width="1" /><line x1="1228" y1="385.5" x2="1308" y2="385.5" stroke="#a0a0a0" stroke-width="1" /><text x="1268" y="399.18" font-size="13" fill="#000" text-anchor="middle" font-weight="normal" font-family="Liberation Sans, sans-serif" >0.500V</text><rect x="1144.5" y="405.5" width="163" height="36" fill="#f0f0f0" stroke="#a8a8a8" stroke-width="1"/><line x1="1146" y1="407" x2="1146" y2="440" stroke="#c8c8c8" stroke-width="2" /><line x1="1155" y1="415" x2="1270" y2="415" stroke="#c0c0c0" stroke-width="1.2" /><line x1="1160" y1="430" x2="1262" y2="430" stroke="#b0b0b0" stroke-width="3" stroke-dasharray="0.8 1.6"/><path d="M1180.5,409 H1189.5 V419 L1185,423 L1180.5,419 Z" fill="url(#btn)" stroke="#8a8a8a" stroke-width="1"/><rect x="1272" y="407" width="35" height="34" fill="#3a3a3a" /><circle cx="1289.5" cy="424" r="16" fill="#22a8c0" stroke="#30c0d8" stroke-width="1.2"/><path d="M1278.2,435.3 A16,16 0 0 1 1276.5,415 L1283.5,420 L1295.5,432 L1292.5,439.7 A16,16 0 0 1 1278.2,435.3 Z" fill="#14788c" opacity="0.55"/><circle cx="1290.5" cy="425" r="5" fill="#14788c"/><path d="M1284.5,419 A8,8 0 1 1 1283.0,429.5" fill="none" stroke="#fff" stroke-width="4"/><path d="M1277.5,418 L1286.5,415 L1285.5,425 Z" fill="#fff"/><path d="M930.14,548.68 A100,100 0 0 1 1128.86,548.68" fill="none" stroke="#f0f020" stroke-width="3.6"/><circle cx="1029.5" cy="560" r="82.5" fill="#f4f4f4"/><circle cx="1029.5" cy="560" r="81.5" fill="url(#cring)" stroke="#e4e4e4" stroke-width="1"/><circle cx="1029.5" cy="560" r="81" fill="url(#cringtop)"/><circle cx="1029.5" cy="560" r="70" fill="url(#cridge)"/><g transform="translate(1029.5,560)"><path d="M53.0,0.0 L70.0,0.0 M52.9,2.8 L69.9,3.7 M52.7,5.5 L69.6,7.3 M52.3,8.3 L69.1,11.0 M51.8,11.0 L68.5,14.6 M51.2,13.7 L67.6,18.1 M50.4,16.4 L66.6,21.6 M49.5,19.0 L65.4,25.1 M48.4,21.6 L63.9,28.5 M47.2,24.1 L62.4,31.8 M45.9,26.5 L60.6,35.0 M44.4,28.9 L58.7,38.1 M42.9,31.2 L56.6,41.1 M41.2,33.4 L54.4,44.1 M39.4,35.5 L52.0,46.8 M37.5,37.5 L49.5,49.5 M35.5,39.4 L46.8,52.0 M33.4,41.2 L44.1,54.4 M31.2,42.9 L41.1,56.6 M28.9,44.4 L38.1,58.7 M26.5,45.9 L35.0,60.6 M24.1,47.2 L31.8,62.4 M21.6,48.4 L28.5,63.9 M19.0,49.5 L25.1,65.4 M16.4,50.4 L21.6,66.6 M13.7,51.2 L18.1,67.6 M11.0,51.8 L14.6,68.5 M8.3,52.3 L11.0,69.1 M5.5,52.7 L7.3,69.6 M2.8,52.9 L3.7,69.9 M0.0,53.0 L0.0,70.0 M-2.8,52.9 L-3.7,69.9 M-5.5,52.7 L-7.3,69.6 M-8.3,52.3 L-11.0,69.1 M-11.0,51.8 L-14.6,68.5 M-13.7,51.2 L-18.1,67.6 M-16.4,50.4 L-21.6,66.6 M-19.0,49.5 L-25.1,65.4 M-21.6,48.4 L-28.5,63.9 M-24.1,47.2 L-31.8,62.4 M-26.5,45.9 L-35.0,60.6 M-28.9,44.4 L-38.1,58.7 M-31.2,42.9 L-41.1,56.6 M-33.4,41.2 L-44.1,54.4 M-35.5,39.4 L-46.8,52.0 M-37.5,37.5 L-49.5,49.5 M-39.4,35.5 L-52.0,46.8 M-41.2,33.4 L-54.4,44.1 M-42.9,31.2 L-56.6,41.1 M-44.4,28.9 L-58.7,38.1 M-45.9,26.5 L-60.6,35.0 M-47.2,24.1 L-62.4,31.8 M-48.4,21.6 L-63.9,28.5 M-49.5,19.0 L-65.4,25.1 M-50.4,16.4 L-66.6,21.6 M-51.2,13.7 L-67.6,18.1 M-51.8,11.0 L-68.5,14.6 M-52.3,8.3 L-69.1,11.0 M-52.7,5.5 L-69.6,7.3 M-52.9,2.8 L-69.9,3.7 M-53.0,0.0 L-70.0,0.0 M-52.9,-2.8 L-69.9,-3.7 M-52.7,-5.5 L-69.6,-7.3 M-52.3,-8.3 L-69.1,-11.0 M-51.8,-11.0 L-68.5,-14.6 M-51.2,-13.7 L-67.6,-18.1 M-50.4,-16.4 L-66.6,-21.6 M-49.5,-19.0 L-65.4,-25.1 M-48.4,-21.6 L-63.9,-28.5 M-47.2,-24.1 L-62.4,-31.8 M-45.9,-26.5 L-60.6,-35.0 M-44.4,-28.9 L-58.7,-38.1 M-42.9,-31.2 L-56.6,-41.1 M-41.2,-33.4 L-54.4,-44.1 M-39.4,-35.5 L-52.0,-46.8 M-37.5,-37.5 L-49.5,-49.5 M-35.5,-39.4 L-46.8,-52.0 M-33.4,-41.2 L-44.1,-54.4 M-31.2,-42.9 L-41.1,-56.6 M-28.9,-44.4 L-38.1,-58.7 M-26.5,-45.9 L-35.0,-60.6 M-24.1,-47.2 L-31.8,-62.4 M-21.6,-48.4 L-28.5,-63.9 M-19.0,-49.5 L-25.1,-65.4 M-16.4,-50.4 L-21.6,-66.6 M-13.7,-51.2 L-18.1,-67.6 M-11.0,-51.8 L-14.6,-68.5 M-8.3,-52.3 L-11.0,-69.1 M-5.5,-52.7 L-7.3,-69.6 M-2.8,-52.9 L-3.7,-69.9 M-0.0,-53.0 L-0.0,-70.0 M2.8,-52.9 L3.7,-69.9 M5.5,-52.7 L7.3,-69.6 M8.3,-52.3 L11.0,-69.1 M11.0,-51.8 L14.6,-68.5 M13.7,-51.2 L18.1,-67.6 M16.4,-50.4 L21.6,-66.6 M19.0,-49.5 L25.1,-65.4 M21.6,-48.4 L28.5,-63.9 M24.1,-47.2 L31.8,-62.4 M26.5,-45.9 L35.0,-60.6 M28.9,-44.4 L38.1,-58.7 M31.2,-42.9 L41.1,-56.6 M33.4,-41.2 L44.1,-54.4 M35.5,-39.4 L46.8,-52.0 M37.5,-37.5 L49.5,-49.5 M39.4,-35.5 L52.0,-46.8 M41.2,-33.4 L54.4,-44.1 M42.9,-31.2 L56.6,-41.1 M44.4,-28.9 L58.7,-38.1 M45.9,-26.5 L60.6,-35.0 M47.2,-24.1 L62.4,-31.8 M48.4,-21.6 L63.9,-28.5 M49.5,-19.0 L65.4,-25.1 M50.4,-16.4 L66.6,-21.6 M51.2,-13.7 L67.6,-18.1 M51.8,-11.0 L68.5,-14.6 M52.3,-8.3 L69.1,-11.0 M52.7,-5.5 L69.6,-7.3 M52.9,-2.8 L69.9,-3.7" stroke="#ffffff" stroke-width="0.9" opacity="0.28"/></g><circle cx="1029.5" cy="563" r="55" fill="#202020" opacity="0.75" filter="url(#blur2)"/><circle cx="1029.5" cy="563" r="52.5" fill="none" stroke="#111" stroke-width="3" opacity="0.55" filter="url(#blur1)"/><circle cx="1029.5" cy="560" r="52" fill="url(#cwhite)"/><circle cx="1039" cy="528" r="10" fill="url(#cdot)"/><g transform="translate(939,556) rotate(-87.5)"><text x="0" y="4.5" font-size="13" fill="#666" text-anchor="middle" font-family="Liberation Sans, sans-serif">50mv</text></g><line x1="948.6" y1="556.4" x2="944.6" y2="556.2" stroke="#f0f020" stroke-width="1.5"/><g transform="translate(958,505.3) rotate(-52.6)"><text x="0" y="4.5" font-size="13" fill="#666" text-anchor="middle" font-family="Liberation Sans, sans-serif">100mv</text></g><line x1="965.2" y1="510.8" x2="962.0" y2="508.4" stroke="#f0f020" stroke-width="1.5"/><g transform="translate(997.3,476.1) rotate(-21.0)"><text x="0" y="4.5" font-size="13" fill="#666" text-anchor="middle" font-family="Liberation Sans, sans-serif">0.2V</text></g><line x1="1000.5" y1="484.4" x2="999.0" y2="480.6" stroke="#f0f020" stroke-width="1.5"/><g transform="translate(1057,473.6) rotate(17.7)"><text x="0" y="4.5" font-size="13" fill="#666" text-anchor="middle" font-family="Liberation Sans, sans-serif">0.5v</text></g><line x1="1054.1" y1="482.8" x2="1055.3" y2="479.0" stroke="#f0f020" stroke-width="1.5"/><g transform="translate(1100,505.3) rotate(52.2)"><text x="0" y="4.5" font-size="13" fill="#666" text-anchor="middle" font-family="Liberation Sans, sans-serif">1v</text></g><line x1="1093.5" y1="510.3" x2="1096.7" y2="507.9" stroke="#f0f020" stroke-width="1.5"/><g transform="translate(1119,553.5) rotate(85.8)"><text x="0" y="4.5" font-size="13" fill="#666" text-anchor="middle" font-family="Liberation Sans, sans-serif">2v</text></g><line x1="1110.3" y1="554.1" x2="1114.3" y2="553.8" stroke="#f0f020" stroke-width="1.5"/><g transform="translate(956.7,612) rotate(234.5)"><text x="0" y="4.5" font-size="13" fill="#666" text-anchor="middle" font-family="Liberation Sans, sans-serif">20mv</text></g><g transform="translate(1111.5,477) rotate(43.4)"><rect x="-18" y="-9" width="36" height="18" rx="1.5" fill="#f0f020"/><path d="M-6,9 L-2,14 L2,9 Z" fill="#f0f020"/><text x="0" y="4.5" font-size="12.5" font-weight="bold" fill="#555" text-anchor="middle" font-family="Liberation Sans, sans-serif">ch: B</text></g><line x1="1136.5" y1="456" x2="1136.5" y2="642" stroke="#909090" stroke-width="1" /><line x1="1137.5" y1="456" x2="1137.5" y2="642" stroke="#fff" stroke-width="1" /><rect x="1150" y="463" width="76" height="29" rx="14.5" fill="#d8d8e0" opacity="0.6" filter="url(#blur1)"/><rect x="1163.5" y="465.5" width="62" height="24" rx="12" fill="url(#pilly)" stroke="#b8b820" stroke-width="1"/><circle cx="1166" cy="480" r="15" fill="#8a8a9a" opacity="0.5" filter="url(#blur1)"/><circle cx="1165.5" cy="478" r="14.5" fill="url(#pknob)" stroke="#9a98a8" stroke-width="0.8"/><text x="1200" y="482.90" font-size="15" fill="#5a5050" text-anchor="middle" font-weight="bold" font-family="Liberation Sans, sans-serif" >chB</text><rect x="1234.5" y="458.5" width="73" height="22" rx="3" fill="url(#btn)" stroke="#707070" stroke-width="1"/><path d="M1240,467 h8 l-4,4 z" fill="#000"/><text x="1305" y="474.18" font-size="13" fill="#000" text-anchor="end" font-weight="bold" font-family="Liberation Sans, sans-serif" >1X</text><rect x="1234.5" y="487.5" width="12" height="12" fill="#f4f4f4" stroke="#8a8a8a" stroke-width="1"/><rect x="1236.5" y="489.5" width="8" height="8" fill="#e8e8e8" stroke="#c8c8c8" stroke-width="0.5"/><text x="1253" y="497.50" font-size="12.5" fill="#000" text-anchor="start" font-weight="normal" font-family="Liberation Sans, sans-serif" >INVERT</text><text x="1147" y="524.68" font-size="13" fill="#a0a0a0" text-anchor="start" font-weight="normal" font-family="Liberation Sans, sans-serif" >DC</text><rect x="1168" y="508" width="60" height="24" rx="12" fill="#e8e8e8" stroke="#f8f8f8" stroke-width="1"/><rect x="1172" y="511" width="52" height="17" rx="8.5" fill="#d4d4d4"/><rect x="1175" y="512" width="30" height="16.5" rx="8.25" fill="url(#tan)"/><circle cx="1197" cy="520.5" r="4.2" fill="#d8b070" stroke="#f0d8b0" stroke-width="0.8"/><text x="1233" y="524.68" font-size="13" fill="#a0a0a0" text-anchor="start" font-weight="normal" font-family="Liberation Sans, sans-serif" >AC</text><rect x="1228" y="544" width="80" height="18" fill="#f0f0f0"/><line x1="1228.5" y1="544" x2="1228.5" y2="561" stroke="#a0a0a0" stroke-width="1" /><line x1="1228" y1="544.5" x2="1308" y2="544.5" stroke="#a0a0a0" stroke-width="1" /><text x="1268" y="558.18" font-size="13" fill="#000" text-anchor="middle" font-weight="normal" font-family="Liberation Sans, sans-serif" >0.500V</text><rect x="1144.5" y="564.5" width="163" height="36" fill="#f0f0f0" stroke="#a8a8a8" stroke-width="1"/><line x1="1146" y1="566" x2="1146" y2="599" stroke="#c8c8c8" stroke-width="2" /><line x1="1155" y1="574" x2="1270" y2="574" stroke="#c0c0c0" stroke-width="1.2" /><line x1="1160" y1="589" x2="1262" y2="589" stroke="#b0b0b0" stroke-width="3" stroke-dasharray="0.8 1.6"/><path d="M1180.5,568 H1189.5 V578 L1185,582 L1180.5,578 Z" fill="url(#btn)" stroke="#8a8a8a" stroke-width="1"/><rect x="1272" y="566" width="35" height="34" fill="#3a3a3a" /><circle cx="1289.5" cy="583" r="16" fill="#d8c810" stroke="#f0e020" stroke-width="1.2"/><path d="M1278.2,594.3 A16,16 0 0 1 1276.5,574 L1283.5,579 L1295.5,591 L1292.5,598.7 A16,16 0 0 1 1278.2,594.3 Z" fill="#a89400" opacity="0.55"/><circle cx="1290.5" cy="584" r="5" fill="#a89400"/><path d="M1284.5,578 A8,8 0 1 1 1283.0,588.5" fill="none" stroke="#fff" stroke-width="4"/><path d="M1277.5,577 L1286.5,574 L1285.5,584 Z" fill="#fff"/><rect x="1144.5" y="619.5" width="12" height="12" fill="#f4f4f4" stroke="#8a8a8a" stroke-width="1"/><rect x="1146.5" y="621.5" width="8" height="8" fill="#e8e8e8" stroke="#c8c8c8" stroke-width="0.5"/><path d="M1168,635 H1178 V613 H1193 V635 H1210 V613 H1226 V635 H1242.5 V613 H1245.5 V635 H1248.5 V613 H1251.5 V635 H1254.5 V613 H1257.5 V635 H1274.5 V613 H1290 V635 H1302" fill="none" stroke="#111" stroke-width="2"/><path d="M921,663 Q921,651 933,651 H1345 V679 H921 Z" fill="url(#stripe)"/><rect x="921" y="679" width="441" height="62" fill="#484848" /><rect x="921" y="679" width="441" height="62" fill="url(#stripe)" opacity="0.3"/><rect x="921" y="739" width="441" height="2" fill="#6a6a6a" /><line x1="1053.5" y1="651" x2="1053.5" y2="679" stroke="#6a6a6a" stroke-width="1" /><line x1="1182.5" y1="651" x2="1182.5" y2="679" stroke="#6a6a6a" stroke-width="1" /><rect x="1277" y="651" width="68" height="28" fill="#2a2a30" /><circle cx="1289" cy="667" r="7" fill="#1a2030" stroke="#555" stroke-width="1"/><circle cx="1288" cy="665" r="3" fill="#3a4a60"/><text x="1319" y="672.54" font-size="14" fill="#d8d8d8" text-anchor="middle" font-weight="normal" font-family="Liberation Sans, sans-serif" letter-spacing="0.6">Sine</text><path d="M934.0,669.0 L934.8,669.0 L935.5,669.0 L936.3,668.7 L937.0,668.5 L937.8,668.8 L938.6,669.0 L939.3,669.0 L940.1,668.6 L940.8,667.7 L941.6,666.9 L942.4,666.5 L943.1,666.8 L943.9,667.6 L944.6,668.5 L945.4,668.4 L946.2,667.4 L946.9,666.5 L947.7,665.8 L948.4,665.5 L949.2,665.8 L949.9,666.6 L950.7,667.5 L951.5,668.4 L952.2,669.0 L953.0,668.8 L953.7,667.9 L954.5,666.9 L955.3,666.3 L956.0,666.3 L956.8,667.0 L957.5,668.0 L958.3,668.9 L959.1,669.0 L959.8,669.0 L960.6,669.0 L961.3,668.8 L962.1,668.5 L962.9,668.7 L963.6,669.0 L964.4,669.0 L965.1,669.0 L965.9,669.0 L966.7,668.6 L967.4,667.8 L968.2,667.2 L968.9,667.0 L969.7,667.4 L970.5,668.1 L971.2,668.9 L972.0,669.0 L972.7,668.6 L973.5,667.8 L974.3,666.8 L975.0,666.0 L975.8,665.5 L976.5,665.6 L977.3,666.3 L978.1,667.2 L978.8,668.1 L979.6,668.9 L980.3,668.2 L981.1,667.3 L981.8,666.3 L982.6,665.7 L983.4,665.5 L984.1,665.9 L984.9,666.7 L985.6,667.7 L986.4,668.6 L987.2,669.0 L987.9,668.8 L988.7,667.9 L989.4,667.0 L990.2,666.5 L991.0,666.7 L991.7,667.4 L992.5,668.3 L993.2,669.0 L994.0,669.0 L994.0,671.0 L993.2,671.0 L992.5,671.7 L991.7,672.6 L991.0,673.3 L990.2,673.5 L989.4,673.0 L988.7,672.1 L987.9,671.2 L987.2,671.0 L986.4,671.4 L985.6,672.3 L984.9,673.3 L984.1,674.1 L983.4,674.5 L982.6,674.3 L981.8,673.7 L981.1,672.7 L980.3,671.8 L979.6,671.1 L978.8,671.9 L978.1,672.8 L977.3,673.7 L976.5,674.4 L975.8,674.5 L975.0,674.0 L974.3,673.2 L973.5,672.2 L972.7,671.4 L972.0,671.0 L971.2,671.1 L970.5,671.9 L969.7,672.6 L968.9,673.0 L968.2,672.8 L967.4,672.2 L966.7,671.4 L965.9,671.0 L965.1,671.0 L964.4,671.0 L963.6,671.0 L962.9,671.3 L962.1,671.5 L961.3,671.2 L960.6,671.0 L959.8,671.0 L959.1,671.0 L958.3,671.1 L957.5,672.0 L956.8,673.0 L956.0,673.7 L955.3,673.7 L954.5,673.1 L953.7,672.1 L953.0,671.2 L952.2,671.0 L951.5,671.6 L950.7,672.5 L949.9,673.4 L949.2,674.2 L948.4,674.5 L947.7,674.2 L946.9,673.5 L946.2,672.6 L945.4,671.6 L944.6,671.5 L943.9,672.4 L943.1,673.2 L942.4,673.5 L941.6,673.1 L940.8,672.3 L940.1,671.4 L939.3,671.0 L938.6,671.0 L937.8,671.2 L937.0,671.5 L936.3,671.3 L935.5,671.0 L934.8,671.0 L934.0,671.0 Z" fill="#f8b010"/><path d="M1072.0,668.8 L1072.5,668.8 L1073.1,668.7 L1073.6,667.5 L1074.1,666.3 L1074.6,666.0 L1075.2,666.8 L1075.7,668.1 L1076.2,668.8 L1076.8,668.8 L1077.3,668.8 L1077.8,668.5 L1078.4,666.7 L1078.9,664.5 L1079.4,663.1 L1079.9,663.5 L1080.5,665.5 L1081.0,667.6 L1081.5,668.8 L1082.1,668.8 L1082.6,668.7 L1083.1,666.5 L1083.6,663.1 L1084.2,660.0 L1084.7,659.1 L1085.2,661.1 L1085.8,664.6 L1086.3,667.5 L1086.8,668.8 L1087.4,668.8 L1087.9,668.4 L1088.4,666.4 L1088.9,663.8 L1089.5,662.1 L1090.0,662.5 L1090.5,664.7 L1091.1,667.2 L1091.6,668.8 L1092.1,668.8 L1092.6,668.7 L1093.2,666.6 L1093.7,663.3 L1094.2,660.1 L1094.8,659.0 L1095.3,661.0 L1095.8,664.4 L1096.4,667.4 L1096.9,668.8 L1097.4,668.8 L1097.9,668.8 L1098.5,667.3 L1099.0,665.4 L1099.5,664.1 L1100.1,664.3 L1100.6,665.9 L1101.1,667.8 L1101.6,668.8 L1102.2,668.8 L1102.7,668.6 L1103.2,668.1 L1103.8,668.1 L1104.3,668.6 L1104.8,668.8 L1105.4,668.8 L1105.9,667.8 L1106.4,665.9 L1106.9,664.3 L1107.5,664.1 L1108.0,665.4 L1108.5,667.3 L1109.1,668.8 L1109.6,667.1 L1110.1,664.3 L1110.6,661.8 L1111.2,661.1 L1111.7,662.8 L1112.2,665.6 L1112.8,668.0 L1113.3,668.8 L1113.8,668.8 L1114.4,668.4 L1114.9,666.3 L1115.4,663.7 L1115.9,662.1 L1116.5,662.6 L1117.0,664.8 L1117.5,667.2 L1118.1,668.8 L1118.6,668.8 L1119.1,668.7 L1119.6,666.6 L1120.2,663.2 L1120.7,660.0 L1121.2,659.1 L1121.8,661.0 L1122.3,664.5 L1122.8,667.5 L1123.4,668.8 L1123.9,668.8 L1124.4,667.6 L1124.9,664.6 L1125.5,660.8 L1126.0,658.2 L1126.5,658.7 L1127.1,662.0 L1127.6,665.7 L1128.1,668.3 L1128.6,668.7 L1129.2,666.8 L1129.7,664.0 L1130.2,661.6 L1130.8,661.1 L1131.3,663.0 L1131.8,665.9 L1132.4,668.2 L1132.9,668.4 L1133.4,666.9 L1133.9,665.5 L1134.5,665.0 L1135.0,665.9 L1135.0,674.1 L1134.5,675.0 L1133.9,674.5 L1133.4,673.1 L1132.9,671.6 L1132.4,671.8 L1131.8,674.1 L1131.3,677.0 L1130.8,678.9 L1130.2,678.4 L1129.7,676.0 L1129.2,673.2 L1128.6,671.3 L1128.1,671.7 L1127.6,674.3 L1127.1,678.0 L1126.5,681.3 L1126.0,681.8 L1125.5,679.2 L1124.9,675.4 L1124.4,672.4 L1123.9,671.2 L1123.4,671.2 L1122.8,672.5 L1122.3,675.5 L1121.8,679.0 L1121.2,680.9 L1120.7,680.0 L1120.2,676.8 L1119.6,673.4 L1119.1,671.3 L1118.6,671.2 L1118.1,671.2 L1117.5,672.8 L1117.0,675.2 L1116.5,677.4 L1115.9,677.9 L1115.4,676.3 L1114.9,673.7 L1114.4,671.6 L1113.8,671.2 L1113.3,671.2 L1112.8,672.0 L1112.2,674.4 L1111.7,677.2 L1111.2,678.9 L1110.6,678.2 L1110.1,675.7 L1109.6,672.9 L1109.1,671.2 L1108.5,672.7 L1108.0,674.6 L1107.5,675.9 L1106.9,675.7 L1106.4,674.1 L1105.9,672.2 L1105.4,671.2 L1104.8,671.2 L1104.3,671.4 L1103.8,671.9 L1103.2,671.9 L1102.7,671.4 L1102.2,671.2 L1101.6,671.2 L1101.1,672.2 L1100.6,674.1 L1100.1,675.7 L1099.5,675.9 L1099.0,674.6 L1098.5,672.7 L1097.9,671.2 L1097.4,671.2 L1096.9,671.2 L1096.4,672.6 L1095.8,675.6 L1095.3,679.0 L1094.8,681.0 L1094.2,679.9 L1093.7,676.7 L1093.2,673.4 L1092.6,671.3 L1092.1,671.2 L1091.6,671.2 L1091.1,672.8 L1090.5,675.3 L1090.0,677.5 L1089.5,677.9 L1088.9,676.2 L1088.4,673.6 L1087.9,671.6 L1087.4,671.2 L1086.8,671.2 L1086.3,672.5 L1085.8,675.4 L1085.2,678.9 L1084.7,680.9 L1084.2,680.0 L1083.6,676.9 L1083.1,673.5 L1082.6,671.3 L1082.1,671.2 L1081.5,671.2 L1081.0,672.4 L1080.5,674.5 L1079.9,676.5 L1079.4,676.9 L1078.9,675.5 L1078.4,673.3 L1077.8,671.5 L1077.3,671.2 L1076.8,671.2 L1076.2,671.2 L1075.7,671.9 L1075.2,673.2 L1074.6,674.0 L1074.1,673.7 L1073.6,672.5 L1073.1,671.3 L1072.5,671.2 L1072.0,671.2 Z" fill="#f8b010"/><path d="M1194.0,669.2 L1194.8,669.2 L1195.5,669.2 L1196.3,669.2 L1197.0,669.2 L1197.8,669.2 L1198.6,669.2 L1199.3,669.0 L1200.1,668.8 L1200.8,669.0 L1201.6,669.2 L1202.4,669.2 L1203.1,669.2 L1203.9,668.9 L1204.6,668.2 L1205.4,667.7 L1206.2,667.5 L1206.9,667.8 L1207.7,668.5 L1208.4,669.1 L1209.2,669.2 L1209.9,669.2 L1210.7,669.2 L1211.5,669.0 L1212.2,668.4 L1213.0,667.8 L1213.7,667.5 L1214.5,667.7 L1215.3,668.3 L1216.0,668.9 L1216.8,669.2 L1217.5,669.2 L1218.3,669.2 L1219.1,669.2 L1219.8,669.2 L1220.6,669.2 L1221.3,669.2 L1222.1,669.2 L1222.9,669.1 L1223.6,668.8 L1224.4,668.8 L1225.1,669.1 L1225.9,669.2 L1226.7,669.2 L1227.4,669.2 L1228.2,668.8 L1228.9,668.2 L1229.7,667.8 L1230.5,667.9 L1231.2,668.3 L1232.0,668.9 L1232.7,669.2 L1233.5,669.2 L1234.3,669.2 L1235.0,668.7 L1235.8,667.9 L1236.5,667.2 L1237.3,667.0 L1238.1,667.4 L1238.8,668.1 L1239.6,668.9 L1240.3,669.2 L1241.1,669.2 L1241.8,669.0 L1242.6,668.3 L1243.4,667.5 L1244.1,667.0 L1244.9,667.1 L1245.6,667.7 L1246.4,668.5 L1247.2,669.2 L1247.9,669.2 L1248.7,669.2 L1249.4,669.1 L1250.2,668.4 L1251.0,668.0 L1251.7,668.3 L1252.5,669.0 L1253.2,669.2 L1254.0,669.2 L1254.0,670.8 L1253.2,670.8 L1252.5,671.0 L1251.7,671.7 L1251.0,672.0 L1250.2,671.6 L1249.4,670.9 L1248.7,670.8 L1247.9,670.8 L1247.2,670.8 L1246.4,671.5 L1245.6,672.3 L1244.9,672.9 L1244.1,673.0 L1243.4,672.5 L1242.6,671.7 L1241.8,671.0 L1241.1,670.8 L1240.3,670.8 L1239.6,671.1 L1238.8,671.9 L1238.1,672.6 L1237.3,673.0 L1236.5,672.8 L1235.8,672.1 L1235.0,671.3 L1234.3,670.8 L1233.5,670.8 L1232.7,670.8 L1232.0,671.1 L1231.2,671.7 L1230.5,672.1 L1229.7,672.2 L1228.9,671.8 L1228.2,671.2 L1227.4,670.8 L1226.7,670.8 L1225.9,670.8 L1225.1,670.9 L1224.4,671.2 L1223.6,671.2 L1222.9,670.9 L1222.1,670.8 L1221.3,670.8 L1220.6,670.8 L1219.8,670.8 L1219.1,670.8 L1218.3,670.8 L1217.5,670.8 L1216.8,670.8 L1216.0,671.1 L1215.3,671.7 L1214.5,672.3 L1213.7,672.5 L1213.0,672.2 L1212.2,671.6 L1211.5,671.0 L1210.7,670.8 L1209.9,670.8 L1209.2,670.8 L1208.4,670.9 L1207.7,671.5 L1206.9,672.2 L1206.2,672.5 L1205.4,672.3 L1204.6,671.8 L1203.9,671.1 L1203.1,670.8 L1202.4,670.8 L1201.6,670.8 L1200.8,671.0 L1200.1,671.2 L1199.3,671.0 L1198.6,670.8 L1197.8,670.8 L1197.0,670.8 L1196.3,670.8 L1195.5,670.8 L1194.8,670.8 L1194.0,670.8 Z" fill="#f8b010"/><path d="M938,689.5 H933 Q930.5,689.5 930.5,692 V732 Q930.5,734.5 933,734.5 H1171 Q1173.5,734.5 1173.5,732 V692 Q1173.5,689.5 1171,689.5 H1001" fill="none" stroke="#f4f4f4" stroke-width="1.5"/><text x="938" y="693.82" font-size="12" fill="#f4f4f4" text-anchor="start" font-weight="normal" font-family="Liberation Sans, sans-serif" >波形刷新率</text><line x1="943" y1="721" x2="1105" y2="721" stroke="#e8e8e8" stroke-width="2.5" /><path d="M987,714 H995 V725 L991,729 L987,725 Z" fill="#e8e8e8" stroke="#aaa" stroke-width="0.8"/><text x="1115" y="704.32" font-size="12" fill="#f0f0f0" text-anchor="middle" font-weight="normal" font-family="Liberation Sans, sans-serif" >6</text><path d="M1110,712 H1135 V703 L1158,718 H1110 Z" fill="#fff"/><path d="M1110,720 H1160 L1165,724 H1110 Z" fill="#fff"/><rect x="1189.5" y="685.5" width="148" height="50" rx="25" fill="#2e2e2e" stroke="#555" stroke-width="1"/><rect x="1193" y="690" width="141" height="41" rx="20.5" fill="url(#stopb)"/><text x="1262" y="714.98" font-size="18" fill="#111" text-anchor="middle" font-weight="normal" font-family="Liberation Sans, sans-serif" >Stop Device</text><rect x="0" y="23" width="1.5" height="745" fill="#a8c4e0" /><rect x="1364" y="23" width="2" height="745" fill="#a8c4e0" /><rect x="0" y="766.5" width="1366" height="1.5" fill="#a8c4e0" /></svg></body></html>
